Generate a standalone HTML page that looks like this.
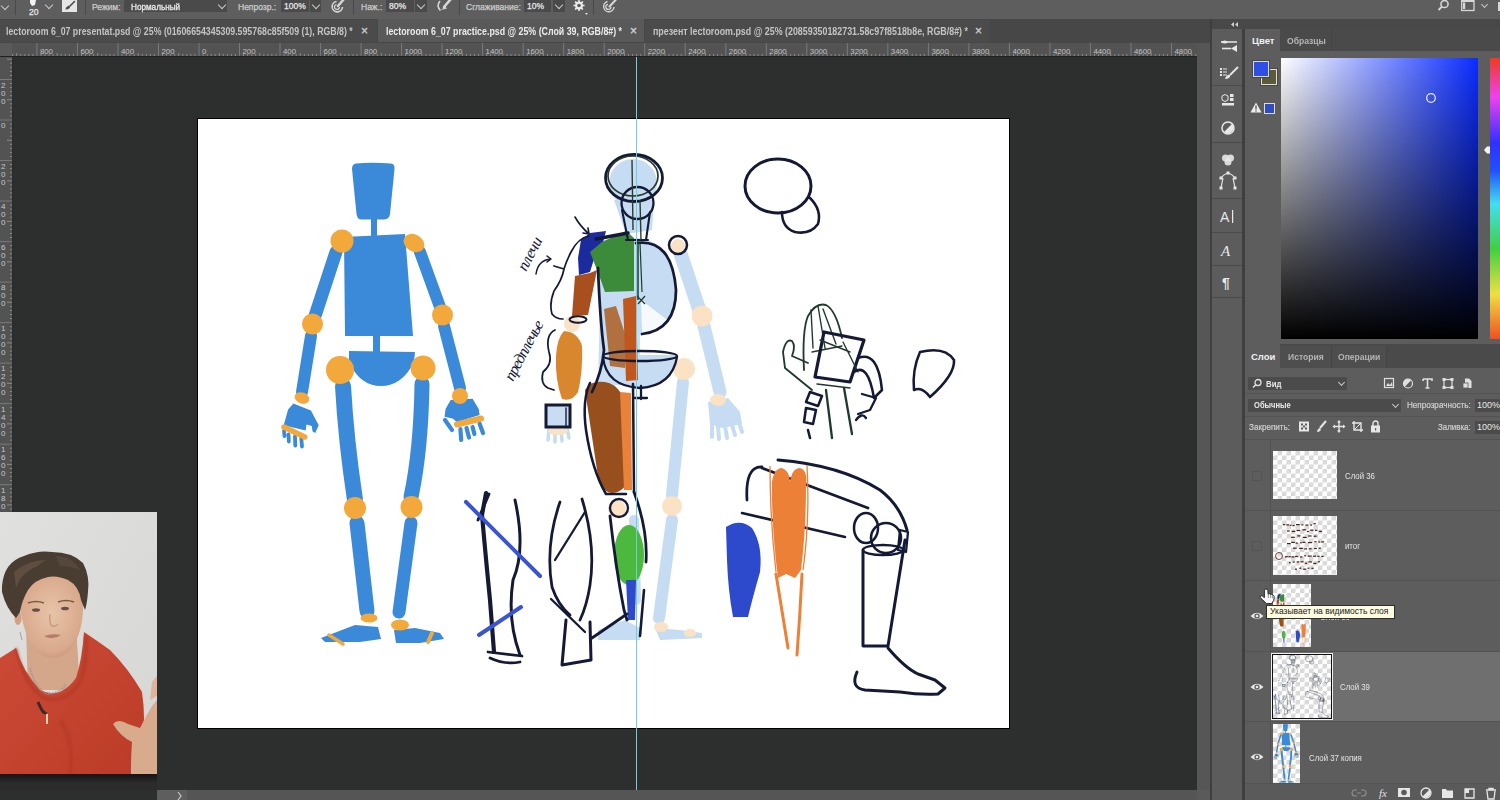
<!DOCTYPE html>
<html><head><meta charset="utf-8">
<style>
*{margin:0;padding:0;box-sizing:border-box}
html,body{width:1500px;height:800px;overflow:hidden;background:#2d2e2e;font-family:"Liberation Sans",sans-serif;position:relative}
.a{position:absolute}
.t{position:absolute;white-space:nowrap;font-family:"Liberation Sans",sans-serif;line-height:1}
svg{position:absolute;overflow:visible}
.chev{position:absolute;width:6px;height:6px;border-right:1.3px solid #c8c8c8;border-bottom:1.3px solid #c8c8c8;transform:rotate(45deg)}
.sep{position:absolute;width:1px;background:#4a4a4a}
.box{position:absolute;background:#4a4a4a}
.ck{background-color:#fff;background-image:linear-gradient(45deg,#d8d8d8 25%,transparent 25%,transparent 75%,#d8d8d8 75%),linear-gradient(45deg,#d8d8d8 25%,transparent 25%,transparent 75%,#d8d8d8 75%);background-size:9px 9px;background-position:0 0,4.5px 4.5px}
</style></head><body>

<!-- ===== options bar ===== -->
<div class="a" id="opt" style="left:0;top:0;width:1500px;height:19px;background:#5e5e5e">
  <div class="chev" style="left:2px;top:3px"></div>
  <div class="sep" style="left:15px;top:0;height:15px"></div>
  <svg style="left:29px;top:0" width="10" height="8"><path d="M1 0 L7 0 L6 5 L3 6 L1 3Z" fill="#f2f2f2"/></svg>
  <div class="t" style="left:29px;top:8px;font-size:8.5px;color:#e8e8e8;-webkit-text-stroke:0.25px currentColor">20</div>
  <div class="chev" style="left:46px;top:2px"></div>
  <div class="a" style="left:62px;top:0;width:15px;height:12px;background:#e6e6e6"></div>
  <svg style="left:62px;top:0" width="15" height="12"><path d="M12.5 1.5 L8 6" stroke="#4a4a4a" stroke-width="1.6" stroke-linecap="round"/><path d="M3.3 9.6 Q4 6.8 6.8 5.6 Q8.6 6.6 7.8 8 Q6 9.6 3.3 9.6Z" fill="#4a4a4a"/></svg>
  <div class="sep" style="left:85px;top:0;height:15px"></div>
  <div class="t" style="left:92px;top:3px;font-size:8.5px;color:#cccccc;-webkit-text-stroke:0.25px currentColor">Режим:</div>
  <div class="box" style="left:124px;top:0;width:103px;height:12px"></div>
  <div class="t" style="left:131px;top:2px;font-size:9.5px;color:#ececec;-webkit-text-stroke:0.3px currentColor;transform:scaleX(0.86);transform-origin:0 0">Нормальный</div>
  <div class="chev" style="left:219px;top:2px"></div>
  <div class="t" style="left:238px;top:3px;font-size:8.5px;color:#cccccc;-webkit-text-stroke:0.25px currentColor">Непрозр.:</div>
  <div class="box" style="left:281px;top:0;width:28px;height:12px"></div>
  <div class="t" style="left:284px;top:2px;font-size:8.5px;color:#e8e8e8;-webkit-text-stroke:0.25px currentColor">100%</div>
  <div class="box" style="left:310px;top:0;width:11px;height:12px"></div>
  <div class="chev" style="left:313px;top:2px"></div>
  <svg style="left:330px;top:0" width="16" height="13"><path d="M6.5 1.5 A5.2 5.2 0 1 0 12.5 7" stroke="#d8d8d8" stroke-width="1.6" fill="none"/><path d="M6.5 4.5 A2.5 2.5 0 1 0 9.5 7" stroke="#d8d8d8" stroke-width="1.2" fill="none"/><path d="M8 6 L14 -1" stroke="#d8d8d8" stroke-width="2.4" stroke-linecap="round"/></svg>
  <div class="sep" style="left:353px;top:0;height:15px"></div>
  <div class="t" style="left:361px;top:3px;font-size:8.5px;color:#cccccc;-webkit-text-stroke:0.25px currentColor">Наж.:</div>
  <div class="box" style="left:386px;top:0;width:28px;height:12px"></div>
  <div class="t" style="left:389px;top:2px;font-size:8.5px;color:#e8e8e8;-webkit-text-stroke:0.25px currentColor">80%</div>
  <div class="box" style="left:415px;top:0;width:12px;height:12px"></div>
  <div class="chev" style="left:418px;top:2px"></div>
  <svg style="left:436px;top:0" width="16" height="12"><path d="M4 1 Q0 6 4.5 10.5" stroke="#d8d8d8" stroke-width="1.6" fill="none"/><path d="M5 10 L9 6.5 L11 8.5 Z" fill="#d8d8d8"/><path d="M8 7 L14.5 -0.5" stroke="#d8d8d8" stroke-width="2.6" stroke-linecap="round"/></svg>
  <div class="sep" style="left:459px;top:0;height:15px"></div>
  <div class="t" style="left:466px;top:3px;font-size:8.5px;color:#cccccc;-webkit-text-stroke:0.25px currentColor">Сглаживание:</div>
  <div class="box" style="left:524px;top:0;width:27px;height:12px"></div>
  <div class="t" style="left:527px;top:2px;font-size:8.5px;color:#e8e8e8;-webkit-text-stroke:0.25px currentColor">10%</div>
  <div class="box" style="left:553px;top:0;width:12px;height:12px"></div>
  <div class="chev" style="left:556px;top:2px"></div>
  <svg style="left:573px;top:0" width="16" height="16"><path d="M9.90,4.63 L11.55,4.77 L11.55,6.23 L9.90,6.37 L9.70,7.02 L9.38,7.64 L10.44,8.91 L9.41,9.94 L8.14,8.88 L7.54,9.19 L6.87,9.40 L6.73,11.05 L5.27,11.05 L5.13,9.40 L4.48,9.20 L3.86,8.88 L2.59,9.94 L1.56,8.91 L2.62,7.64 L2.31,7.04 L2.10,6.37 L0.45,6.23 L0.45,4.77 L2.10,4.63 L2.30,3.98 L2.62,3.36 L1.56,2.09 L2.59,1.06 L3.86,2.12 L4.46,1.81 L5.13,1.60 L5.27,-0.05 L6.73,-0.05 L6.87,1.60 L7.52,1.80 L8.14,2.12 L9.41,1.06 L10.44,2.09 L9.38,3.36 L9.69,3.96Z" fill="#ececec"/><circle cx="6" cy="5.5" r="1.8" fill="#5e5e5e"/><path d="M12 13 L15 13 L13.5 15Z" fill="#e0e0e0"/></svg>
  <div class="sep" style="left:593px;top:0;height:15px"></div>
  <svg style="left:602px;top:0" width="16" height="12"><path d="M5.5 1.5 A5.2 5.2 0 1 0 12 7" stroke="#d8d8d8" stroke-width="1.4" fill="none"/><path d="M6 4.3 A2.6 2.6 0 1 0 9 7" stroke="#d8d8d8" stroke-width="1.2" fill="none"/><path d="M7.5 6.5 L14 -0.5" stroke="#d8d8d8" stroke-width="2" stroke-linecap="round"/></svg>
  <svg style="left:1437px;top:0" width="14" height="12"><circle cx="7.5" cy="4" r="3.6" stroke="#d8d8d8" stroke-width="1.5" fill="none"/><path d="M5 6.5 L1.5 10" stroke="#d8d8d8" stroke-width="1.8"/></svg>
  <svg style="left:1461px;top:0" width="14" height="12"><rect x="0.7" y="0.7" width="12.3" height="9.8" fill="none" stroke="#d8d8d8" stroke-width="1.3"/><rect x="0.7" y="0" width="12.3" height="2" fill="#d8d8d8"/><rect x="2" y="2.5" width="2.2" height="6.5" fill="#d8d8d8"/></svg>
  <div class="chev" style="left:1482px;top:2px;width:5px;height:5px"></div>
  <div class="a" style="left:1498px;top:2px;width:2px;height:9px;background:#d8d8d8"></div>
</div>

<!-- ===== document tab bar ===== -->
<div class="a" id="tabs" style="left:0;top:19px;width:1211px;height:24px;background:#474747"></div>
<div class="a" style="left:0;top:20px;width:377px;height:22px;background:#4b4b4b"></div>
<div class="a" style="left:645px;top:20px;width:345px;height:22px;background:#4b4b4b"></div>
<div class="a" style="left:378px;top:19px;width:266px;height:23px;background:#595959"></div>
<div class="t" id="tab1" style="left:6px;top:27px;font-size:10px;font-weight:bold;color:#c4c4c4;transform:scaleX(0.878);transform-origin:0 0">lectoroom 6_07 presentat.psd @ 25% (01606654345309.595768c85f509 (1), RGB/8) *</div>
<div class="t" style="left:361px;top:25px;font-size:12px;-webkit-text-stroke:0.4px currentColor;color:#c8c8c8">×</div>
<div class="t" id="tab2" style="left:386px;top:27px;font-size:10px;font-weight:bold;color:#ececec;transform:scaleX(0.8815);transform-origin:0 0">lectoroom 6_07 practice.psd @ 25% (Слой 39, RGB/8#) *</div>
<div class="t" style="left:630px;top:25px;font-size:12px;-webkit-text-stroke:0.4px currentColor;color:#d0d0d0">×</div>
<div class="t" id="tab3" style="left:653px;top:27px;font-size:10px;font-weight:bold;color:#c4c4c4;transform:scaleX(0.887);transform-origin:0 0">презент lectoroom.psd @ 25% (20859350182731.58c97f8518b8e, RGB/8#) *</div>
<div class="t" style="left:975px;top:25px;font-size:12px;-webkit-text-stroke:0.4px currentColor;color:#c8c8c8">×</div>

<!-- ===== rulers ===== -->
<div class="a" id="hr" style="left:0;top:43px;width:1197px;height:13px;background:#535353">
 <svg style="left:0;top:0" width="1197" height="13"><rect x="12.1" y="11" width="1" height="2" fill="#8a8a8a"/>
<rect x="16.2" y="10" width="1" height="3" fill="#8a8a8a"/>
<rect x="20.2" y="11" width="1" height="2" fill="#8a8a8a"/>
<rect x="24.3" y="11" width="1" height="2" fill="#8a8a8a"/>
<rect x="28.3" y="11" width="1" height="2" fill="#8a8a8a"/>
<rect x="32.4" y="11" width="1" height="2" fill="#8a8a8a"/>
<rect x="36.4" y="0" width="1" height="13" fill="#7a7a7a"/>
<rect x="40.5" y="11" width="1" height="2" fill="#8a8a8a"/>
<rect x="44.5" y="11" width="1" height="2" fill="#8a8a8a"/>
<rect x="48.6" y="11" width="1" height="2" fill="#8a8a8a"/>
<rect x="52.6" y="11" width="1" height="2" fill="#8a8a8a"/>
<rect x="56.7" y="10" width="1" height="3" fill="#8a8a8a"/>
<rect x="60.7" y="11" width="1" height="2" fill="#8a8a8a"/>
<rect x="64.8" y="11" width="1" height="2" fill="#8a8a8a"/>
<rect x="68.8" y="11" width="1" height="2" fill="#8a8a8a"/>
<rect x="72.9" y="11" width="1" height="2" fill="#8a8a8a"/>
<text x="39.9" y="11" font-size="7.8" fill="#c4c4c4" font-family="Liberation Sans">800</text>
<rect x="76.9" y="0" width="1" height="13" fill="#7a7a7a"/>
<rect x="81.0" y="11" width="1" height="2" fill="#8a8a8a"/>
<rect x="85.0" y="11" width="1" height="2" fill="#8a8a8a"/>
<rect x="89.1" y="11" width="1" height="2" fill="#8a8a8a"/>
<rect x="93.1" y="11" width="1" height="2" fill="#8a8a8a"/>
<rect x="97.2" y="10" width="1" height="3" fill="#8a8a8a"/>
<rect x="101.3" y="11" width="1" height="2" fill="#8a8a8a"/>
<rect x="105.3" y="11" width="1" height="2" fill="#8a8a8a"/>
<rect x="109.4" y="11" width="1" height="2" fill="#8a8a8a"/>
<rect x="113.4" y="11" width="1" height="2" fill="#8a8a8a"/>
<text x="80.4" y="11" font-size="7.8" fill="#c4c4c4" font-family="Liberation Sans">600</text>
<rect x="117.5" y="0" width="1" height="13" fill="#7a7a7a"/>
<rect x="121.5" y="11" width="1" height="2" fill="#8a8a8a"/>
<rect x="125.6" y="11" width="1" height="2" fill="#8a8a8a"/>
<rect x="129.6" y="11" width="1" height="2" fill="#8a8a8a"/>
<rect x="133.7" y="11" width="1" height="2" fill="#8a8a8a"/>
<rect x="137.7" y="10" width="1" height="3" fill="#8a8a8a"/>
<rect x="141.8" y="11" width="1" height="2" fill="#8a8a8a"/>
<rect x="145.8" y="11" width="1" height="2" fill="#8a8a8a"/>
<rect x="149.9" y="11" width="1" height="2" fill="#8a8a8a"/>
<rect x="153.9" y="11" width="1" height="2" fill="#8a8a8a"/>
<text x="121.0" y="11" font-size="7.8" fill="#c4c4c4" font-family="Liberation Sans">400</text>
<rect x="158.0" y="0" width="1" height="13" fill="#7a7a7a"/>
<rect x="162.0" y="11" width="1" height="2" fill="#8a8a8a"/>
<rect x="166.1" y="11" width="1" height="2" fill="#8a8a8a"/>
<rect x="170.1" y="11" width="1" height="2" fill="#8a8a8a"/>
<rect x="174.2" y="11" width="1" height="2" fill="#8a8a8a"/>
<rect x="178.2" y="10" width="1" height="3" fill="#8a8a8a"/>
<rect x="182.3" y="11" width="1" height="2" fill="#8a8a8a"/>
<rect x="186.3" y="11" width="1" height="2" fill="#8a8a8a"/>
<rect x="190.4" y="11" width="1" height="2" fill="#8a8a8a"/>
<rect x="194.4" y="11" width="1" height="2" fill="#8a8a8a"/>
<text x="161.5" y="11" font-size="7.8" fill="#c4c4c4" font-family="Liberation Sans">200</text>
<rect x="198.5" y="0" width="1" height="13" fill="#7a7a7a"/>
<rect x="202.6" y="11" width="1" height="2" fill="#8a8a8a"/>
<rect x="206.6" y="11" width="1" height="2" fill="#8a8a8a"/>
<rect x="210.7" y="11" width="1" height="2" fill="#8a8a8a"/>
<rect x="214.7" y="11" width="1" height="2" fill="#8a8a8a"/>
<rect x="218.8" y="10" width="1" height="3" fill="#8a8a8a"/>
<rect x="222.8" y="11" width="1" height="2" fill="#8a8a8a"/>
<rect x="226.9" y="11" width="1" height="2" fill="#8a8a8a"/>
<rect x="230.9" y="11" width="1" height="2" fill="#8a8a8a"/>
<rect x="235.0" y="11" width="1" height="2" fill="#8a8a8a"/>
<text x="202.0" y="11" font-size="7.8" fill="#c4c4c4" font-family="Liberation Sans">0</text>
<rect x="239.0" y="0" width="1" height="13" fill="#7a7a7a"/>
<rect x="243.1" y="11" width="1" height="2" fill="#8a8a8a"/>
<rect x="247.1" y="11" width="1" height="2" fill="#8a8a8a"/>
<rect x="251.2" y="11" width="1" height="2" fill="#8a8a8a"/>
<rect x="255.2" y="11" width="1" height="2" fill="#8a8a8a"/>
<rect x="259.3" y="10" width="1" height="3" fill="#8a8a8a"/>
<rect x="263.3" y="11" width="1" height="2" fill="#8a8a8a"/>
<rect x="267.4" y="11" width="1" height="2" fill="#8a8a8a"/>
<rect x="271.4" y="11" width="1" height="2" fill="#8a8a8a"/>
<rect x="275.5" y="11" width="1" height="2" fill="#8a8a8a"/>
<text x="242.5" y="11" font-size="7.8" fill="#c4c4c4" font-family="Liberation Sans">200</text>
<rect x="279.5" y="0" width="1" height="13" fill="#7a7a7a"/>
<rect x="283.6" y="11" width="1" height="2" fill="#8a8a8a"/>
<rect x="287.6" y="11" width="1" height="2" fill="#8a8a8a"/>
<rect x="291.7" y="11" width="1" height="2" fill="#8a8a8a"/>
<rect x="295.7" y="11" width="1" height="2" fill="#8a8a8a"/>
<rect x="299.8" y="10" width="1" height="3" fill="#8a8a8a"/>
<rect x="303.9" y="11" width="1" height="2" fill="#8a8a8a"/>
<rect x="307.9" y="11" width="1" height="2" fill="#8a8a8a"/>
<rect x="312.0" y="11" width="1" height="2" fill="#8a8a8a"/>
<rect x="316.0" y="11" width="1" height="2" fill="#8a8a8a"/>
<text x="283.0" y="11" font-size="7.8" fill="#c4c4c4" font-family="Liberation Sans">400</text>
<rect x="320.1" y="0" width="1" height="13" fill="#7a7a7a"/>
<rect x="324.1" y="11" width="1" height="2" fill="#8a8a8a"/>
<rect x="328.2" y="11" width="1" height="2" fill="#8a8a8a"/>
<rect x="332.2" y="11" width="1" height="2" fill="#8a8a8a"/>
<rect x="336.3" y="11" width="1" height="2" fill="#8a8a8a"/>
<rect x="340.3" y="10" width="1" height="3" fill="#8a8a8a"/>
<rect x="344.4" y="11" width="1" height="2" fill="#8a8a8a"/>
<rect x="348.4" y="11" width="1" height="2" fill="#8a8a8a"/>
<rect x="352.5" y="11" width="1" height="2" fill="#8a8a8a"/>
<rect x="356.5" y="11" width="1" height="2" fill="#8a8a8a"/>
<text x="323.6" y="11" font-size="7.8" fill="#c4c4c4" font-family="Liberation Sans">600</text>
<rect x="360.6" y="0" width="1" height="13" fill="#7a7a7a"/>
<rect x="364.6" y="11" width="1" height="2" fill="#8a8a8a"/>
<rect x="368.7" y="11" width="1" height="2" fill="#8a8a8a"/>
<rect x="372.7" y="11" width="1" height="2" fill="#8a8a8a"/>
<rect x="376.8" y="11" width="1" height="2" fill="#8a8a8a"/>
<rect x="380.8" y="10" width="1" height="3" fill="#8a8a8a"/>
<rect x="384.9" y="11" width="1" height="2" fill="#8a8a8a"/>
<rect x="388.9" y="11" width="1" height="2" fill="#8a8a8a"/>
<rect x="393.0" y="11" width="1" height="2" fill="#8a8a8a"/>
<rect x="397.0" y="11" width="1" height="2" fill="#8a8a8a"/>
<text x="364.1" y="11" font-size="7.8" fill="#c4c4c4" font-family="Liberation Sans">800</text>
<rect x="401.1" y="0" width="1" height="13" fill="#7a7a7a"/>
<rect x="405.2" y="11" width="1" height="2" fill="#8a8a8a"/>
<rect x="409.2" y="11" width="1" height="2" fill="#8a8a8a"/>
<rect x="413.3" y="11" width="1" height="2" fill="#8a8a8a"/>
<rect x="417.3" y="11" width="1" height="2" fill="#8a8a8a"/>
<rect x="421.4" y="10" width="1" height="3" fill="#8a8a8a"/>
<rect x="425.4" y="11" width="1" height="2" fill="#8a8a8a"/>
<rect x="429.5" y="11" width="1" height="2" fill="#8a8a8a"/>
<rect x="433.5" y="11" width="1" height="2" fill="#8a8a8a"/>
<rect x="437.6" y="11" width="1" height="2" fill="#8a8a8a"/>
<text x="404.6" y="11" font-size="7.8" fill="#c4c4c4" font-family="Liberation Sans">1000</text>
<rect x="441.6" y="0" width="1" height="13" fill="#7a7a7a"/>
<rect x="445.7" y="11" width="1" height="2" fill="#8a8a8a"/>
<rect x="449.7" y="11" width="1" height="2" fill="#8a8a8a"/>
<rect x="453.8" y="11" width="1" height="2" fill="#8a8a8a"/>
<rect x="457.8" y="11" width="1" height="2" fill="#8a8a8a"/>
<rect x="461.9" y="10" width="1" height="3" fill="#8a8a8a"/>
<rect x="465.9" y="11" width="1" height="2" fill="#8a8a8a"/>
<rect x="470.0" y="11" width="1" height="2" fill="#8a8a8a"/>
<rect x="474.0" y="11" width="1" height="2" fill="#8a8a8a"/>
<rect x="478.1" y="11" width="1" height="2" fill="#8a8a8a"/>
<text x="445.1" y="11" font-size="7.8" fill="#c4c4c4" font-family="Liberation Sans">1200</text>
<rect x="482.1" y="0" width="1" height="13" fill="#7a7a7a"/>
<rect x="486.2" y="11" width="1" height="2" fill="#8a8a8a"/>
<rect x="490.2" y="11" width="1" height="2" fill="#8a8a8a"/>
<rect x="494.3" y="11" width="1" height="2" fill="#8a8a8a"/>
<rect x="498.3" y="11" width="1" height="2" fill="#8a8a8a"/>
<rect x="502.4" y="10" width="1" height="3" fill="#8a8a8a"/>
<rect x="506.5" y="11" width="1" height="2" fill="#8a8a8a"/>
<rect x="510.5" y="11" width="1" height="2" fill="#8a8a8a"/>
<rect x="514.6" y="11" width="1" height="2" fill="#8a8a8a"/>
<rect x="518.6" y="11" width="1" height="2" fill="#8a8a8a"/>
<text x="485.6" y="11" font-size="7.8" fill="#c4c4c4" font-family="Liberation Sans">1400</text>
<rect x="522.7" y="0" width="1" height="13" fill="#7a7a7a"/>
<rect x="526.7" y="11" width="1" height="2" fill="#8a8a8a"/>
<rect x="530.8" y="11" width="1" height="2" fill="#8a8a8a"/>
<rect x="534.8" y="11" width="1" height="2" fill="#8a8a8a"/>
<rect x="538.9" y="11" width="1" height="2" fill="#8a8a8a"/>
<rect x="542.9" y="10" width="1" height="3" fill="#8a8a8a"/>
<rect x="547.0" y="11" width="1" height="2" fill="#8a8a8a"/>
<rect x="551.0" y="11" width="1" height="2" fill="#8a8a8a"/>
<rect x="555.1" y="11" width="1" height="2" fill="#8a8a8a"/>
<rect x="559.1" y="11" width="1" height="2" fill="#8a8a8a"/>
<text x="526.2" y="11" font-size="7.8" fill="#c4c4c4" font-family="Liberation Sans">1600</text>
<rect x="563.2" y="0" width="1" height="13" fill="#7a7a7a"/>
<rect x="567.2" y="11" width="1" height="2" fill="#8a8a8a"/>
<rect x="571.3" y="11" width="1" height="2" fill="#8a8a8a"/>
<rect x="575.3" y="11" width="1" height="2" fill="#8a8a8a"/>
<rect x="579.4" y="11" width="1" height="2" fill="#8a8a8a"/>
<rect x="583.4" y="10" width="1" height="3" fill="#8a8a8a"/>
<rect x="587.5" y="11" width="1" height="2" fill="#8a8a8a"/>
<rect x="591.5" y="11" width="1" height="2" fill="#8a8a8a"/>
<rect x="595.6" y="11" width="1" height="2" fill="#8a8a8a"/>
<rect x="599.6" y="11" width="1" height="2" fill="#8a8a8a"/>
<text x="566.7" y="11" font-size="7.8" fill="#c4c4c4" font-family="Liberation Sans">1800</text>
<rect x="603.7" y="0" width="1" height="13" fill="#7a7a7a"/>
<rect x="607.8" y="11" width="1" height="2" fill="#8a8a8a"/>
<rect x="611.8" y="11" width="1" height="2" fill="#8a8a8a"/>
<rect x="615.9" y="11" width="1" height="2" fill="#8a8a8a"/>
<rect x="619.9" y="11" width="1" height="2" fill="#8a8a8a"/>
<rect x="624.0" y="10" width="1" height="3" fill="#8a8a8a"/>
<rect x="628.0" y="11" width="1" height="2" fill="#8a8a8a"/>
<rect x="632.1" y="11" width="1" height="2" fill="#8a8a8a"/>
<rect x="636.1" y="11" width="1" height="2" fill="#8a8a8a"/>
<rect x="640.2" y="11" width="1" height="2" fill="#8a8a8a"/>
<text x="607.2" y="11" font-size="7.8" fill="#c4c4c4" font-family="Liberation Sans">2000</text>
<rect x="644.2" y="0" width="1" height="13" fill="#7a7a7a"/>
<rect x="648.3" y="11" width="1" height="2" fill="#8a8a8a"/>
<rect x="652.3" y="11" width="1" height="2" fill="#8a8a8a"/>
<rect x="656.4" y="11" width="1" height="2" fill="#8a8a8a"/>
<rect x="660.4" y="11" width="1" height="2" fill="#8a8a8a"/>
<rect x="664.5" y="10" width="1" height="3" fill="#8a8a8a"/>
<rect x="668.5" y="11" width="1" height="2" fill="#8a8a8a"/>
<rect x="672.6" y="11" width="1" height="2" fill="#8a8a8a"/>
<rect x="676.6" y="11" width="1" height="2" fill="#8a8a8a"/>
<rect x="680.7" y="11" width="1" height="2" fill="#8a8a8a"/>
<text x="647.7" y="11" font-size="7.8" fill="#c4c4c4" font-family="Liberation Sans">2200</text>
<rect x="684.7" y="0" width="1" height="13" fill="#7a7a7a"/>
<rect x="688.8" y="11" width="1" height="2" fill="#8a8a8a"/>
<rect x="692.8" y="11" width="1" height="2" fill="#8a8a8a"/>
<rect x="696.9" y="11" width="1" height="2" fill="#8a8a8a"/>
<rect x="700.9" y="11" width="1" height="2" fill="#8a8a8a"/>
<rect x="705.0" y="10" width="1" height="3" fill="#8a8a8a"/>
<rect x="709.1" y="11" width="1" height="2" fill="#8a8a8a"/>
<rect x="713.1" y="11" width="1" height="2" fill="#8a8a8a"/>
<rect x="717.2" y="11" width="1" height="2" fill="#8a8a8a"/>
<rect x="721.2" y="11" width="1" height="2" fill="#8a8a8a"/>
<text x="688.2" y="11" font-size="7.8" fill="#c4c4c4" font-family="Liberation Sans">2400</text>
<rect x="725.3" y="0" width="1" height="13" fill="#7a7a7a"/>
<rect x="729.3" y="11" width="1" height="2" fill="#8a8a8a"/>
<rect x="733.4" y="11" width="1" height="2" fill="#8a8a8a"/>
<rect x="737.4" y="11" width="1" height="2" fill="#8a8a8a"/>
<rect x="741.5" y="11" width="1" height="2" fill="#8a8a8a"/>
<rect x="745.5" y="10" width="1" height="3" fill="#8a8a8a"/>
<rect x="749.6" y="11" width="1" height="2" fill="#8a8a8a"/>
<rect x="753.6" y="11" width="1" height="2" fill="#8a8a8a"/>
<rect x="757.7" y="11" width="1" height="2" fill="#8a8a8a"/>
<rect x="761.7" y="11" width="1" height="2" fill="#8a8a8a"/>
<text x="728.8" y="11" font-size="7.8" fill="#c4c4c4" font-family="Liberation Sans">2600</text>
<rect x="765.8" y="0" width="1" height="13" fill="#7a7a7a"/>
<rect x="769.8" y="11" width="1" height="2" fill="#8a8a8a"/>
<rect x="773.9" y="11" width="1" height="2" fill="#8a8a8a"/>
<rect x="777.9" y="11" width="1" height="2" fill="#8a8a8a"/>
<rect x="782.0" y="11" width="1" height="2" fill="#8a8a8a"/>
<rect x="786.0" y="10" width="1" height="3" fill="#8a8a8a"/>
<rect x="790.1" y="11" width="1" height="2" fill="#8a8a8a"/>
<rect x="794.1" y="11" width="1" height="2" fill="#8a8a8a"/>
<rect x="798.2" y="11" width="1" height="2" fill="#8a8a8a"/>
<rect x="802.2" y="11" width="1" height="2" fill="#8a8a8a"/>
<text x="769.3" y="11" font-size="7.8" fill="#c4c4c4" font-family="Liberation Sans">2800</text>
<rect x="806.3" y="0" width="1" height="13" fill="#7a7a7a"/>
<rect x="810.4" y="11" width="1" height="2" fill="#8a8a8a"/>
<rect x="814.4" y="11" width="1" height="2" fill="#8a8a8a"/>
<rect x="818.5" y="11" width="1" height="2" fill="#8a8a8a"/>
<rect x="822.5" y="11" width="1" height="2" fill="#8a8a8a"/>
<rect x="826.6" y="10" width="1" height="3" fill="#8a8a8a"/>
<rect x="830.6" y="11" width="1" height="2" fill="#8a8a8a"/>
<rect x="834.7" y="11" width="1" height="2" fill="#8a8a8a"/>
<rect x="838.7" y="11" width="1" height="2" fill="#8a8a8a"/>
<rect x="842.8" y="11" width="1" height="2" fill="#8a8a8a"/>
<text x="809.8" y="11" font-size="7.8" fill="#c4c4c4" font-family="Liberation Sans">3000</text>
<rect x="846.8" y="0" width="1" height="13" fill="#7a7a7a"/>
<rect x="850.9" y="11" width="1" height="2" fill="#8a8a8a"/>
<rect x="854.9" y="11" width="1" height="2" fill="#8a8a8a"/>
<rect x="859.0" y="11" width="1" height="2" fill="#8a8a8a"/>
<rect x="863.0" y="11" width="1" height="2" fill="#8a8a8a"/>
<rect x="867.1" y="10" width="1" height="3" fill="#8a8a8a"/>
<rect x="871.1" y="11" width="1" height="2" fill="#8a8a8a"/>
<rect x="875.2" y="11" width="1" height="2" fill="#8a8a8a"/>
<rect x="879.2" y="11" width="1" height="2" fill="#8a8a8a"/>
<rect x="883.3" y="11" width="1" height="2" fill="#8a8a8a"/>
<text x="850.3" y="11" font-size="7.8" fill="#c4c4c4" font-family="Liberation Sans">3200</text>
<rect x="887.3" y="0" width="1" height="13" fill="#7a7a7a"/>
<rect x="891.4" y="11" width="1" height="2" fill="#8a8a8a"/>
<rect x="895.4" y="11" width="1" height="2" fill="#8a8a8a"/>
<rect x="899.5" y="11" width="1" height="2" fill="#8a8a8a"/>
<rect x="903.5" y="11" width="1" height="2" fill="#8a8a8a"/>
<rect x="907.6" y="10" width="1" height="3" fill="#8a8a8a"/>
<rect x="911.7" y="11" width="1" height="2" fill="#8a8a8a"/>
<rect x="915.7" y="11" width="1" height="2" fill="#8a8a8a"/>
<rect x="919.8" y="11" width="1" height="2" fill="#8a8a8a"/>
<rect x="923.8" y="11" width="1" height="2" fill="#8a8a8a"/>
<text x="890.8" y="11" font-size="7.8" fill="#c4c4c4" font-family="Liberation Sans">3400</text>
<rect x="927.9" y="0" width="1" height="13" fill="#7a7a7a"/>
<rect x="931.9" y="11" width="1" height="2" fill="#8a8a8a"/>
<rect x="936.0" y="11" width="1" height="2" fill="#8a8a8a"/>
<rect x="940.0" y="11" width="1" height="2" fill="#8a8a8a"/>
<rect x="944.1" y="11" width="1" height="2" fill="#8a8a8a"/>
<rect x="948.1" y="10" width="1" height="3" fill="#8a8a8a"/>
<rect x="952.2" y="11" width="1" height="2" fill="#8a8a8a"/>
<rect x="956.2" y="11" width="1" height="2" fill="#8a8a8a"/>
<rect x="960.3" y="11" width="1" height="2" fill="#8a8a8a"/>
<rect x="964.3" y="11" width="1" height="2" fill="#8a8a8a"/>
<text x="931.4" y="11" font-size="7.8" fill="#c4c4c4" font-family="Liberation Sans">3600</text>
<rect x="968.4" y="0" width="1" height="13" fill="#7a7a7a"/>
<rect x="972.4" y="11" width="1" height="2" fill="#8a8a8a"/>
<rect x="976.5" y="11" width="1" height="2" fill="#8a8a8a"/>
<rect x="980.5" y="11" width="1" height="2" fill="#8a8a8a"/>
<rect x="984.6" y="11" width="1" height="2" fill="#8a8a8a"/>
<rect x="988.6" y="10" width="1" height="3" fill="#8a8a8a"/>
<rect x="992.7" y="11" width="1" height="2" fill="#8a8a8a"/>
<rect x="996.7" y="11" width="1" height="2" fill="#8a8a8a"/>
<rect x="1000.8" y="11" width="1" height="2" fill="#8a8a8a"/>
<rect x="1004.8" y="11" width="1" height="2" fill="#8a8a8a"/>
<text x="971.9" y="11" font-size="7.8" fill="#c4c4c4" font-family="Liberation Sans">3800</text>
<rect x="1008.9" y="0" width="1" height="13" fill="#7a7a7a"/>
<rect x="1013.0" y="11" width="1" height="2" fill="#8a8a8a"/>
<rect x="1017.0" y="11" width="1" height="2" fill="#8a8a8a"/>
<rect x="1021.1" y="11" width="1" height="2" fill="#8a8a8a"/>
<rect x="1025.1" y="11" width="1" height="2" fill="#8a8a8a"/>
<rect x="1029.2" y="10" width="1" height="3" fill="#8a8a8a"/>
<rect x="1033.2" y="11" width="1" height="2" fill="#8a8a8a"/>
<rect x="1037.3" y="11" width="1" height="2" fill="#8a8a8a"/>
<rect x="1041.3" y="11" width="1" height="2" fill="#8a8a8a"/>
<rect x="1045.4" y="11" width="1" height="2" fill="#8a8a8a"/>
<text x="1012.4" y="11" font-size="7.8" fill="#c4c4c4" font-family="Liberation Sans">4000</text>
<rect x="1049.4" y="0" width="1" height="13" fill="#7a7a7a"/>
<rect x="1053.5" y="11" width="1" height="2" fill="#8a8a8a"/>
<rect x="1057.5" y="11" width="1" height="2" fill="#8a8a8a"/>
<rect x="1061.6" y="11" width="1" height="2" fill="#8a8a8a"/>
<rect x="1065.6" y="11" width="1" height="2" fill="#8a8a8a"/>
<rect x="1069.7" y="10" width="1" height="3" fill="#8a8a8a"/>
<rect x="1073.7" y="11" width="1" height="2" fill="#8a8a8a"/>
<rect x="1077.8" y="11" width="1" height="2" fill="#8a8a8a"/>
<rect x="1081.8" y="11" width="1" height="2" fill="#8a8a8a"/>
<rect x="1085.9" y="11" width="1" height="2" fill="#8a8a8a"/>
<text x="1052.9" y="11" font-size="7.8" fill="#c4c4c4" font-family="Liberation Sans">4200</text>
<rect x="1089.9" y="0" width="1" height="13" fill="#7a7a7a"/>
<rect x="1094.0" y="11" width="1" height="2" fill="#8a8a8a"/>
<rect x="1098.0" y="11" width="1" height="2" fill="#8a8a8a"/>
<rect x="1102.1" y="11" width="1" height="2" fill="#8a8a8a"/>
<rect x="1106.1" y="11" width="1" height="2" fill="#8a8a8a"/>
<rect x="1110.2" y="10" width="1" height="3" fill="#8a8a8a"/>
<rect x="1114.3" y="11" width="1" height="2" fill="#8a8a8a"/>
<rect x="1118.3" y="11" width="1" height="2" fill="#8a8a8a"/>
<rect x="1122.4" y="11" width="1" height="2" fill="#8a8a8a"/>
<rect x="1126.4" y="11" width="1" height="2" fill="#8a8a8a"/>
<text x="1093.4" y="11" font-size="7.8" fill="#c4c4c4" font-family="Liberation Sans">4400</text>
<rect x="1130.5" y="0" width="1" height="13" fill="#7a7a7a"/>
<rect x="1134.5" y="11" width="1" height="2" fill="#8a8a8a"/>
<rect x="1138.6" y="11" width="1" height="2" fill="#8a8a8a"/>
<rect x="1142.6" y="11" width="1" height="2" fill="#8a8a8a"/>
<rect x="1146.7" y="11" width="1" height="2" fill="#8a8a8a"/>
<rect x="1150.7" y="10" width="1" height="3" fill="#8a8a8a"/>
<rect x="1154.8" y="11" width="1" height="2" fill="#8a8a8a"/>
<rect x="1158.8" y="11" width="1" height="2" fill="#8a8a8a"/>
<rect x="1162.9" y="11" width="1" height="2" fill="#8a8a8a"/>
<rect x="1166.9" y="11" width="1" height="2" fill="#8a8a8a"/>
<text x="1134.0" y="11" font-size="7.8" fill="#c4c4c4" font-family="Liberation Sans">4600</text>
<rect x="1171.0" y="0" width="1" height="13" fill="#7a7a7a"/>
<rect x="1175.0" y="11" width="1" height="2" fill="#8a8a8a"/>
<rect x="1179.1" y="11" width="1" height="2" fill="#8a8a8a"/>
<rect x="1183.1" y="11" width="1" height="2" fill="#8a8a8a"/>
<rect x="1187.2" y="11" width="1" height="2" fill="#8a8a8a"/>
<rect x="1191.2" y="10" width="1" height="3" fill="#8a8a8a"/>
<rect x="1195.3" y="11" width="1" height="2" fill="#8a8a8a"/>
<text x="1174.5" y="11" font-size="7.8" fill="#c4c4c4" font-family="Liberation Sans">4800</text></svg>
</div>
<div class="a" style="left:0;top:56px;width:1197px;height:1px;background:#222"></div>
<div class="a" style="left:0;top:43px;width:12px;height:13px;background:#5a5a5a"></div>
<div class="a" id="vr" style="left:0;top:57px;width:12px;height:733px;background:#535353">
 <svg style="left:0;top:0" width="12" height="733"><rect x="7" y="1.7" width="5" height="1" fill="#8a8a8a"/>
<rect x="10" y="5.8" width="2" height="1" fill="#8a8a8a"/>
<rect x="10" y="9.8" width="2" height="1" fill="#8a8a8a"/>
<rect x="10" y="13.9" width="2" height="1" fill="#8a8a8a"/>
<rect x="10" y="17.9" width="2" height="1" fill="#8a8a8a"/>
<rect x="0" y="22.0" width="12" height="1" fill="#7a7a7a"/>
<rect x="10" y="26.0" width="2" height="1" fill="#8a8a8a"/>
<rect x="10" y="30.1" width="2" height="1" fill="#8a8a8a"/>
<rect x="10" y="34.1" width="2" height="1" fill="#8a8a8a"/>
<rect x="10" y="38.2" width="2" height="1" fill="#8a8a8a"/>
<rect x="7" y="42.2" width="5" height="1" fill="#8a8a8a"/>
<rect x="10" y="46.3" width="2" height="1" fill="#8a8a8a"/>
<rect x="10" y="50.3" width="2" height="1" fill="#8a8a8a"/>
<rect x="10" y="54.4" width="2" height="1" fill="#8a8a8a"/>
<rect x="10" y="58.4" width="2" height="1" fill="#8a8a8a"/>
<text x="1" y="30.5" font-size="8" fill="#c9c9c9" font-family="Liberation Sans">2</text>
<text x="1" y="38.5" font-size="8" fill="#c9c9c9" font-family="Liberation Sans">0</text>
<text x="1" y="46.5" font-size="8" fill="#c9c9c9" font-family="Liberation Sans">0</text>
<rect x="0" y="62.5" width="12" height="1" fill="#7a7a7a"/>
<rect x="10" y="66.6" width="2" height="1" fill="#8a8a8a"/>
<rect x="10" y="70.6" width="2" height="1" fill="#8a8a8a"/>
<rect x="10" y="74.7" width="2" height="1" fill="#8a8a8a"/>
<rect x="10" y="78.7" width="2" height="1" fill="#8a8a8a"/>
<rect x="7" y="82.8" width="5" height="1" fill="#8a8a8a"/>
<rect x="10" y="86.8" width="2" height="1" fill="#8a8a8a"/>
<rect x="10" y="90.9" width="2" height="1" fill="#8a8a8a"/>
<rect x="10" y="94.9" width="2" height="1" fill="#8a8a8a"/>
<rect x="10" y="99.0" width="2" height="1" fill="#8a8a8a"/>
<text x="1" y="71.0" font-size="8" fill="#c9c9c9" font-family="Liberation Sans">0</text>
<rect x="0" y="103.0" width="12" height="1" fill="#7a7a7a"/>
<rect x="10" y="107.1" width="2" height="1" fill="#8a8a8a"/>
<rect x="10" y="111.1" width="2" height="1" fill="#8a8a8a"/>
<rect x="10" y="115.2" width="2" height="1" fill="#8a8a8a"/>
<rect x="10" y="119.2" width="2" height="1" fill="#8a8a8a"/>
<rect x="7" y="123.3" width="5" height="1" fill="#8a8a8a"/>
<rect x="10" y="127.3" width="2" height="1" fill="#8a8a8a"/>
<rect x="10" y="131.4" width="2" height="1" fill="#8a8a8a"/>
<rect x="10" y="135.4" width="2" height="1" fill="#8a8a8a"/>
<rect x="10" y="139.5" width="2" height="1" fill="#8a8a8a"/>
<text x="1" y="111.5" font-size="8" fill="#c9c9c9" font-family="Liberation Sans">2</text>
<text x="1" y="119.5" font-size="8" fill="#c9c9c9" font-family="Liberation Sans">0</text>
<text x="1" y="127.5" font-size="8" fill="#c9c9c9" font-family="Liberation Sans">0</text>
<rect x="0" y="143.5" width="12" height="1" fill="#7a7a7a"/>
<rect x="10" y="147.6" width="2" height="1" fill="#8a8a8a"/>
<rect x="10" y="151.6" width="2" height="1" fill="#8a8a8a"/>
<rect x="10" y="155.7" width="2" height="1" fill="#8a8a8a"/>
<rect x="10" y="159.7" width="2" height="1" fill="#8a8a8a"/>
<rect x="7" y="163.8" width="5" height="1" fill="#8a8a8a"/>
<rect x="10" y="167.9" width="2" height="1" fill="#8a8a8a"/>
<rect x="10" y="171.9" width="2" height="1" fill="#8a8a8a"/>
<rect x="10" y="176.0" width="2" height="1" fill="#8a8a8a"/>
<rect x="10" y="180.0" width="2" height="1" fill="#8a8a8a"/>
<text x="1" y="152.0" font-size="8" fill="#c9c9c9" font-family="Liberation Sans">4</text>
<text x="1" y="160.0" font-size="8" fill="#c9c9c9" font-family="Liberation Sans">0</text>
<text x="1" y="168.0" font-size="8" fill="#c9c9c9" font-family="Liberation Sans">0</text>
<rect x="0" y="184.1" width="12" height="1" fill="#7a7a7a"/>
<rect x="10" y="188.1" width="2" height="1" fill="#8a8a8a"/>
<rect x="10" y="192.2" width="2" height="1" fill="#8a8a8a"/>
<rect x="10" y="196.2" width="2" height="1" fill="#8a8a8a"/>
<rect x="10" y="200.3" width="2" height="1" fill="#8a8a8a"/>
<rect x="7" y="204.3" width="5" height="1" fill="#8a8a8a"/>
<rect x="10" y="208.4" width="2" height="1" fill="#8a8a8a"/>
<rect x="10" y="212.4" width="2" height="1" fill="#8a8a8a"/>
<rect x="10" y="216.5" width="2" height="1" fill="#8a8a8a"/>
<rect x="10" y="220.5" width="2" height="1" fill="#8a8a8a"/>
<text x="1" y="192.6" font-size="8" fill="#c9c9c9" font-family="Liberation Sans">6</text>
<text x="1" y="200.6" font-size="8" fill="#c9c9c9" font-family="Liberation Sans">0</text>
<text x="1" y="208.6" font-size="8" fill="#c9c9c9" font-family="Liberation Sans">0</text>
<rect x="0" y="224.6" width="12" height="1" fill="#7a7a7a"/>
<rect x="10" y="228.6" width="2" height="1" fill="#8a8a8a"/>
<rect x="10" y="232.7" width="2" height="1" fill="#8a8a8a"/>
<rect x="10" y="236.7" width="2" height="1" fill="#8a8a8a"/>
<rect x="10" y="240.8" width="2" height="1" fill="#8a8a8a"/>
<rect x="7" y="244.8" width="5" height="1" fill="#8a8a8a"/>
<rect x="10" y="248.9" width="2" height="1" fill="#8a8a8a"/>
<rect x="10" y="252.9" width="2" height="1" fill="#8a8a8a"/>
<rect x="10" y="257.0" width="2" height="1" fill="#8a8a8a"/>
<rect x="10" y="261.0" width="2" height="1" fill="#8a8a8a"/>
<text x="1" y="233.1" font-size="8" fill="#c9c9c9" font-family="Liberation Sans">8</text>
<text x="1" y="241.1" font-size="8" fill="#c9c9c9" font-family="Liberation Sans">0</text>
<text x="1" y="249.1" font-size="8" fill="#c9c9c9" font-family="Liberation Sans">0</text>
<rect x="0" y="265.1" width="12" height="1" fill="#7a7a7a"/>
<rect x="10" y="269.2" width="2" height="1" fill="#8a8a8a"/>
<rect x="10" y="273.2" width="2" height="1" fill="#8a8a8a"/>
<rect x="10" y="277.3" width="2" height="1" fill="#8a8a8a"/>
<rect x="10" y="281.3" width="2" height="1" fill="#8a8a8a"/>
<rect x="7" y="285.4" width="5" height="1" fill="#8a8a8a"/>
<rect x="10" y="289.4" width="2" height="1" fill="#8a8a8a"/>
<rect x="10" y="293.5" width="2" height="1" fill="#8a8a8a"/>
<rect x="10" y="297.5" width="2" height="1" fill="#8a8a8a"/>
<rect x="10" y="301.6" width="2" height="1" fill="#8a8a8a"/>
<text x="1" y="273.6" font-size="8" fill="#c9c9c9" font-family="Liberation Sans">1</text>
<text x="1" y="281.6" font-size="8" fill="#c9c9c9" font-family="Liberation Sans">0</text>
<text x="1" y="289.6" font-size="8" fill="#c9c9c9" font-family="Liberation Sans">0</text>
<text x="1" y="297.6" font-size="8" fill="#c9c9c9" font-family="Liberation Sans">0</text>
<rect x="0" y="305.6" width="12" height="1" fill="#7a7a7a"/>
<rect x="10" y="309.7" width="2" height="1" fill="#8a8a8a"/>
<rect x="10" y="313.7" width="2" height="1" fill="#8a8a8a"/>
<rect x="10" y="317.8" width="2" height="1" fill="#8a8a8a"/>
<rect x="10" y="321.8" width="2" height="1" fill="#8a8a8a"/>
<rect x="7" y="325.9" width="5" height="1" fill="#8a8a8a"/>
<rect x="10" y="329.9" width="2" height="1" fill="#8a8a8a"/>
<rect x="10" y="334.0" width="2" height="1" fill="#8a8a8a"/>
<rect x="10" y="338.0" width="2" height="1" fill="#8a8a8a"/>
<rect x="10" y="342.1" width="2" height="1" fill="#8a8a8a"/>
<text x="1" y="314.1" font-size="8" fill="#c9c9c9" font-family="Liberation Sans">1</text>
<text x="1" y="322.1" font-size="8" fill="#c9c9c9" font-family="Liberation Sans">2</text>
<text x="1" y="330.1" font-size="8" fill="#c9c9c9" font-family="Liberation Sans">0</text>
<text x="1" y="338.1" font-size="8" fill="#c9c9c9" font-family="Liberation Sans">0</text>
<rect x="0" y="346.1" width="12" height="1" fill="#7a7a7a"/>
<rect x="10" y="350.2" width="2" height="1" fill="#8a8a8a"/>
<rect x="10" y="354.2" width="2" height="1" fill="#8a8a8a"/>
<rect x="10" y="358.3" width="2" height="1" fill="#8a8a8a"/>
<rect x="10" y="362.3" width="2" height="1" fill="#8a8a8a"/>
<rect x="7" y="366.4" width="5" height="1" fill="#8a8a8a"/>
<rect x="10" y="370.5" width="2" height="1" fill="#8a8a8a"/>
<rect x="10" y="374.5" width="2" height="1" fill="#8a8a8a"/>
<rect x="10" y="378.6" width="2" height="1" fill="#8a8a8a"/>
<rect x="10" y="382.6" width="2" height="1" fill="#8a8a8a"/>
<text x="1" y="354.6" font-size="8" fill="#c9c9c9" font-family="Liberation Sans">1</text>
<text x="1" y="362.6" font-size="8" fill="#c9c9c9" font-family="Liberation Sans">4</text>
<text x="1" y="370.6" font-size="8" fill="#c9c9c9" font-family="Liberation Sans">0</text>
<text x="1" y="378.6" font-size="8" fill="#c9c9c9" font-family="Liberation Sans">0</text>
<rect x="0" y="386.7" width="12" height="1" fill="#7a7a7a"/>
<rect x="10" y="390.7" width="2" height="1" fill="#8a8a8a"/>
<rect x="10" y="394.8" width="2" height="1" fill="#8a8a8a"/>
<rect x="10" y="398.8" width="2" height="1" fill="#8a8a8a"/>
<rect x="10" y="402.9" width="2" height="1" fill="#8a8a8a"/>
<rect x="7" y="406.9" width="5" height="1" fill="#8a8a8a"/>
<rect x="10" y="411.0" width="2" height="1" fill="#8a8a8a"/>
<rect x="10" y="415.0" width="2" height="1" fill="#8a8a8a"/>
<rect x="10" y="419.1" width="2" height="1" fill="#8a8a8a"/>
<rect x="10" y="423.1" width="2" height="1" fill="#8a8a8a"/>
<text x="1" y="395.2" font-size="8" fill="#c9c9c9" font-family="Liberation Sans">1</text>
<text x="1" y="403.2" font-size="8" fill="#c9c9c9" font-family="Liberation Sans">6</text>
<text x="1" y="411.2" font-size="8" fill="#c9c9c9" font-family="Liberation Sans">0</text>
<text x="1" y="419.2" font-size="8" fill="#c9c9c9" font-family="Liberation Sans">0</text>
<rect x="0" y="427.2" width="12" height="1" fill="#7a7a7a"/>
<rect x="10" y="431.2" width="2" height="1" fill="#8a8a8a"/>
<rect x="10" y="435.3" width="2" height="1" fill="#8a8a8a"/>
<rect x="10" y="439.3" width="2" height="1" fill="#8a8a8a"/>
<rect x="10" y="443.4" width="2" height="1" fill="#8a8a8a"/>
<rect x="7" y="447.4" width="5" height="1" fill="#8a8a8a"/>
<rect x="10" y="451.5" width="2" height="1" fill="#8a8a8a"/>
<rect x="10" y="455.5" width="2" height="1" fill="#8a8a8a"/>
<rect x="10" y="459.6" width="2" height="1" fill="#8a8a8a"/>
<rect x="10" y="463.6" width="2" height="1" fill="#8a8a8a"/>
<text x="1" y="435.7" font-size="8" fill="#c9c9c9" font-family="Liberation Sans">1</text>
<text x="1" y="443.7" font-size="8" fill="#c9c9c9" font-family="Liberation Sans">8</text>
<text x="1" y="451.7" font-size="8" fill="#c9c9c9" font-family="Liberation Sans">0</text>
<text x="1" y="459.7" font-size="8" fill="#c9c9c9" font-family="Liberation Sans">0</text>
<rect x="0" y="467.7" width="12" height="1" fill="#7a7a7a"/>
<rect x="10" y="471.8" width="2" height="1" fill="#8a8a8a"/>
<rect x="10" y="475.8" width="2" height="1" fill="#8a8a8a"/>
<rect x="10" y="479.9" width="2" height="1" fill="#8a8a8a"/>
<rect x="10" y="483.9" width="2" height="1" fill="#8a8a8a"/>
<rect x="7" y="488.0" width="5" height="1" fill="#8a8a8a"/>
<rect x="10" y="492.0" width="2" height="1" fill="#8a8a8a"/>
<rect x="10" y="496.1" width="2" height="1" fill="#8a8a8a"/>
<rect x="10" y="500.1" width="2" height="1" fill="#8a8a8a"/>
<rect x="10" y="504.2" width="2" height="1" fill="#8a8a8a"/>
<text x="1" y="476.2" font-size="8" fill="#c9c9c9" font-family="Liberation Sans">2</text>
<text x="1" y="484.2" font-size="8" fill="#c9c9c9" font-family="Liberation Sans">0</text>
<text x="1" y="492.2" font-size="8" fill="#c9c9c9" font-family="Liberation Sans">0</text>
<text x="1" y="500.2" font-size="8" fill="#c9c9c9" font-family="Liberation Sans">0</text>
<rect x="0" y="508.2" width="12" height="1" fill="#7a7a7a"/>
<rect x="10" y="512.3" width="2" height="1" fill="#8a8a8a"/>
<rect x="10" y="516.3" width="2" height="1" fill="#8a8a8a"/>
<rect x="10" y="520.4" width="2" height="1" fill="#8a8a8a"/>
<rect x="10" y="524.4" width="2" height="1" fill="#8a8a8a"/>
<rect x="7" y="528.5" width="5" height="1" fill="#8a8a8a"/>
<rect x="10" y="532.5" width="2" height="1" fill="#8a8a8a"/>
<rect x="10" y="536.6" width="2" height="1" fill="#8a8a8a"/>
<rect x="10" y="540.6" width="2" height="1" fill="#8a8a8a"/>
<rect x="10" y="544.7" width="2" height="1" fill="#8a8a8a"/>
<text x="1" y="516.7" font-size="8" fill="#c9c9c9" font-family="Liberation Sans">2</text>
<text x="1" y="524.7" font-size="8" fill="#c9c9c9" font-family="Liberation Sans">2</text>
<text x="1" y="532.7" font-size="8" fill="#c9c9c9" font-family="Liberation Sans">0</text>
<text x="1" y="540.7" font-size="8" fill="#c9c9c9" font-family="Liberation Sans">0</text>
<rect x="0" y="548.7" width="12" height="1" fill="#7a7a7a"/>
<rect x="10" y="552.8" width="2" height="1" fill="#8a8a8a"/>
<rect x="10" y="556.8" width="2" height="1" fill="#8a8a8a"/>
<rect x="10" y="560.9" width="2" height="1" fill="#8a8a8a"/>
<rect x="10" y="564.9" width="2" height="1" fill="#8a8a8a"/>
<rect x="7" y="569.0" width="5" height="1" fill="#8a8a8a"/>
<rect x="10" y="573.1" width="2" height="1" fill="#8a8a8a"/>
<rect x="10" y="577.1" width="2" height="1" fill="#8a8a8a"/>
<rect x="10" y="581.2" width="2" height="1" fill="#8a8a8a"/>
<rect x="10" y="585.2" width="2" height="1" fill="#8a8a8a"/>
<text x="1" y="557.2" font-size="8" fill="#c9c9c9" font-family="Liberation Sans">2</text>
<text x="1" y="565.2" font-size="8" fill="#c9c9c9" font-family="Liberation Sans">4</text>
<text x="1" y="573.2" font-size="8" fill="#c9c9c9" font-family="Liberation Sans">0</text>
<text x="1" y="581.2" font-size="8" fill="#c9c9c9" font-family="Liberation Sans">0</text>
<rect x="0" y="589.3" width="12" height="1" fill="#7a7a7a"/>
<rect x="10" y="593.3" width="2" height="1" fill="#8a8a8a"/>
<rect x="10" y="597.4" width="2" height="1" fill="#8a8a8a"/>
<rect x="10" y="601.4" width="2" height="1" fill="#8a8a8a"/>
<rect x="10" y="605.5" width="2" height="1" fill="#8a8a8a"/>
<rect x="7" y="609.5" width="5" height="1" fill="#8a8a8a"/>
<rect x="10" y="613.6" width="2" height="1" fill="#8a8a8a"/>
<rect x="10" y="617.6" width="2" height="1" fill="#8a8a8a"/>
<rect x="10" y="621.7" width="2" height="1" fill="#8a8a8a"/>
<rect x="10" y="625.7" width="2" height="1" fill="#8a8a8a"/>
<text x="1" y="597.8" font-size="8" fill="#c9c9c9" font-family="Liberation Sans">2</text>
<text x="1" y="605.8" font-size="8" fill="#c9c9c9" font-family="Liberation Sans">6</text>
<text x="1" y="613.8" font-size="8" fill="#c9c9c9" font-family="Liberation Sans">0</text>
<text x="1" y="621.8" font-size="8" fill="#c9c9c9" font-family="Liberation Sans">0</text>
<rect x="0" y="629.8" width="12" height="1" fill="#7a7a7a"/>
<rect x="10" y="633.8" width="2" height="1" fill="#8a8a8a"/>
<rect x="10" y="637.9" width="2" height="1" fill="#8a8a8a"/>
<rect x="10" y="641.9" width="2" height="1" fill="#8a8a8a"/>
<rect x="10" y="646.0" width="2" height="1" fill="#8a8a8a"/>
<rect x="7" y="650.0" width="5" height="1" fill="#8a8a8a"/>
<rect x="10" y="654.1" width="2" height="1" fill="#8a8a8a"/>
<rect x="10" y="658.1" width="2" height="1" fill="#8a8a8a"/>
<rect x="10" y="662.2" width="2" height="1" fill="#8a8a8a"/>
<rect x="10" y="666.2" width="2" height="1" fill="#8a8a8a"/>
<text x="1" y="638.3" font-size="8" fill="#c9c9c9" font-family="Liberation Sans">2</text>
<text x="1" y="646.3" font-size="8" fill="#c9c9c9" font-family="Liberation Sans">8</text>
<text x="1" y="654.3" font-size="8" fill="#c9c9c9" font-family="Liberation Sans">0</text>
<text x="1" y="662.3" font-size="8" fill="#c9c9c9" font-family="Liberation Sans">0</text>
<rect x="0" y="670.3" width="12" height="1" fill="#7a7a7a"/>
<rect x="10" y="674.4" width="2" height="1" fill="#8a8a8a"/>
<rect x="10" y="678.4" width="2" height="1" fill="#8a8a8a"/>
<rect x="10" y="682.5" width="2" height="1" fill="#8a8a8a"/>
<rect x="10" y="686.5" width="2" height="1" fill="#8a8a8a"/>
<rect x="7" y="690.6" width="5" height="1" fill="#8a8a8a"/>
<rect x="10" y="694.6" width="2" height="1" fill="#8a8a8a"/>
<rect x="10" y="698.7" width="2" height="1" fill="#8a8a8a"/>
<rect x="10" y="702.7" width="2" height="1" fill="#8a8a8a"/>
<rect x="10" y="706.8" width="2" height="1" fill="#8a8a8a"/>
<text x="1" y="678.8" font-size="8" fill="#c9c9c9" font-family="Liberation Sans">3</text>
<text x="1" y="686.8" font-size="8" fill="#c9c9c9" font-family="Liberation Sans">0</text>
<text x="1" y="694.8" font-size="8" fill="#c9c9c9" font-family="Liberation Sans">0</text>
<text x="1" y="702.8" font-size="8" fill="#c9c9c9" font-family="Liberation Sans">0</text>
<rect x="0" y="710.8" width="12" height="1" fill="#7a7a7a"/>
<rect x="10" y="714.9" width="2" height="1" fill="#8a8a8a"/>
<rect x="10" y="718.9" width="2" height="1" fill="#8a8a8a"/>
<rect x="10" y="723.0" width="2" height="1" fill="#8a8a8a"/>
<rect x="10" y="727.0" width="2" height="1" fill="#8a8a8a"/>
<rect x="7" y="731.1" width="5" height="1" fill="#8a8a8a"/>
<text x="1" y="719.3" font-size="8" fill="#c9c9c9" font-family="Liberation Sans">3</text>
<text x="1" y="727.3" font-size="8" fill="#c9c9c9" font-family="Liberation Sans">2</text></svg>
</div>
<div class="a" style="left:12px;top:57px;width:1px;height:733px;background:#2a2a2a"></div>

<!-- ===== canvas ===== -->
<div class="a" style="left:197px;top:118px;width:813px;height:611px;background:#000"></div>
<div class="a" id="doc" style="left:198px;top:119px;width:811px;height:609px;background:#fff;overflow:hidden">
<svg style="left:-198px;top:-119px" width="1500" height="800" viewBox="0 0 1500 800">
<defs>
<style>
.bl{fill:#3b8ad9}.bs{stroke:#3b8ad9;stroke-linecap:round;fill:none}
.or{fill:#f2a83b}.os{stroke:#f2a83b;stroke-linecap:round;fill:none}
.lb{fill:#c5dcf2}.lbs{stroke:#c5dcf2;stroke-linecap:round;fill:none}
.pe{fill:#fbe2c4}
.nv{stroke:#141936;fill:none;stroke-linecap:round;stroke-linejoin:round}
</style>
</defs>
<g id="g37">
<!-- ===== LEFT BLUE MANNEQUIN ===== -->
<path class="bl" d="M356,163.5 Q372,162 391,163.5 Q395,164 394.5,169 L390,214 Q389.5,219 384,219.5 L362,219.5 Q357,219.5 356.5,214 L352,169 Q352,164 356,163.5 Z"/>
<rect class="bl" x="371" y="216" width="6" height="22"/>
<path class="bl" d="M344,237 L405,234 L413,336 L345,336 Z"/>
<rect class="bl" x="373" y="334" width="7" height="19"/>
<path class="bl" d="M349,351 L415,352 L414,362 Q402,386 381,386 Q360,386 349,362 Z"/>
<path class="bs" d="M336,252 L313,322" stroke-width="13"/>
<path class="bs" d="M420,252 L440,307" stroke-width="12"/>
<path class="bs" d="M311,336 L302,392" stroke-width="12"/>
<path class="bs" d="M444,326 L460,388" stroke-width="12"/>
<path class="bs" d="M343,386 Q346,440 355,500" stroke-width="16"/>
<path class="bs" d="M422,384 Q421,450 411,497" stroke-width="15"/>
<path class="bs" d="M357,523 L367,611" stroke-width="15"/>
<path class="bs" d="M411,523 L399,612" stroke-width="13"/>
<!-- hands -->
<path class="bl" d="M293.4,403.4 L310.9,410.4 L318.7,425.2 L315.2,433.1 L312.6,431.4 L311.7,426.1 L306.5,424.4 L305.6,430.5 L283.7,425.2 L288.1,409.5 Z"/>
<path class="bs" d="M284,431 L284.5,436 M288.5,434.5 L288.8,441.5 M295,436.5 L295.3,445.5 M301.2,437.5 L302,446.5" stroke-width="3.8"/>
<path class="os" d="M284,427 L304.7,437" stroke-width="5.5"/>
<path class="bl" d="M450.7,400.1 L472.6,398.8 L478.7,408.9 L479.6,415 L456.9,422 L452.5,418.5 L444.6,416.7 L445.5,408.9 Z"/>
<path class="bs" d="M445,420 L452,430 M460.4,429 L461.2,440 M466.5,428 L469,437.5 M472.6,427 L474.4,434 M479.6,423.7 L483,433" stroke-width="4.2"/>
<path class="os" d="M457,424.5 L481,418.5" stroke-width="6"/>
<!-- feet -->
<path class="bl" d="M321,638 L355,625 L378,627 L381,639 L360,642 L325,642 Z"/>
<path class="os" d="M329,635 L343,644" stroke-width="3.5"/>
<path class="bl" d="M394,630 L415,628 L440,633 L444,639 L420,643 L396,643 Z"/>
<path class="os" d="M428,642 L432,633" stroke-width="4"/>
<!-- joints -->
<circle class="or" cx="342" cy="241" r="11.5"/>
<ellipse class="or" cx="414" cy="243" rx="11" ry="8.5" transform="rotate(30 414 243)"/>
<circle class="or" cx="312.5" cy="324" r="10.5"/>
<circle class="or" cx="442.5" cy="315" r="10.5"/>
<ellipse class="or" cx="302" cy="398" rx="7.5" ry="5.5" transform="rotate(20 302 398)"/>
<circle class="or" cx="460" cy="396" r="8"/>
<circle class="or" cx="340" cy="370" r="14"/>
<circle class="or" cx="423" cy="368" r="12.5"/>
<circle class="or" cx="355" cy="508" r="11"/>
<circle class="or" cx="411.5" cy="507" r="11"/>
<ellipse class="or" cx="369" cy="618" rx="8.5" ry="4.5"/>
<ellipse class="or" cx="400" cy="625" rx="9" ry="5.5"/>

</g>
<g id="g36">
<!-- ===== MIDDLE FIGURE ===== -->
<!-- light blue skeleton -->
<ellipse class="lb" cx="633" cy="183" rx="24" ry="24"/>
<path class="lb" d="M614,200 L654,200 L652,230 L626,234 Z"/>
<path class="lb" d="M598,240 L636,238 Q672,240 676,290 Q676,330 640,334 L600,336 Z"/>
<path class="lb" d="M604,355 Q606,385 640,387 Q672,385 676,355 Z"/>
<path class="lbs" d="M680,252 L700,312" stroke-width="14"/>
<path class="lbs" d="M704,326 L720,392" stroke-width="13"/>
<path class="lb" d="M708,402 L728,398 L740,412 L742,424 L722,428 L710,424 Z"/>
<path class="lbs" d="M712,424 L712,437 M718,426 L719,439 M725,426 L727,438 M732,425 L735,435 M739,422 L742,432" stroke-width="4"/>
<path class="lbs" d="M683,382 L672,495" stroke-width="12"/>
<path class="lbs" d="M672,520 L659,618" stroke-width="12"/>
<path class="lb" d="M655,628 L680,630 L702,633 L702,638 L660,640 Z"/>
<path class="lb" d="M598,630 L625,620 L640,628 L640,640 L598,640 Z"/>
<path class="lbs" d="M634,520 L636,600" stroke-width="10"/>
<path class="lb" d="M600,300 L640,298 L640,385 L598,385 Z" opacity="0.9"/><path fill="#ffffff" d="M641,300 L674,325 Q668,332 642,334 Z" opacity="0.85"/>
<!-- peach joints -->
<circle class="pe" cx="702" cy="316" r="10.5"/>
<circle class="pe" cx="684" cy="369" r="11"/>
<circle class="pe" cx="672" cy="506" r="10"/>
<ellipse class="pe" cx="661" cy="627" rx="7" ry="5"/>
<ellipse class="pe" cx="718" cy="400" rx="8" ry="6"/>
<ellipse class="pe" cx="572" cy="324" rx="8" ry="8"/>
<circle class="pe" cx="617" cy="509" r="9"/>
<path class="lbs" d="M549,428 L548,440 M555,430 L555,442 M561,430 L562,441 M567,428 L569,438" stroke-width="3.5"/><ellipse class="pe" cx="558" cy="431" rx="10" ry="4"/>
<ellipse class="pe" cx="690" cy="633" rx="6" ry="4"/>
<ellipse class="pe" cx="678" cy="246" rx="7" ry="7"/>
</g>
<g id="g38">
<!-- colored muscles -->
<path fill="#1b2b9e" d="M581,240 L590,233 L606,231 L602,246 L594,259 L590,272 L579,275 L578,258 Z"/>
<path fill="#3c8b3b" d="M590,252 L602,242 L626,231 L634,238 L634,291 L605,292 L599,275 Z"/>
<path fill="#a74f1d" d="M575,276 L590,273 L597,270 L588,315 L572,316 Z"/>
<path fill="#d9872f" d="M564,331 Q578,332 582,346 Q583,372 578,392 Q572,402 562,399 Q555,380 556,356 Q557,338 564,331 Z"/>
<path fill="#b0703f" d="M604,309 L616,306 L627,340 L625,368 L610,366 Z"/>
<path fill="#c0571f" d="M623,299 L636,296 L638,380 L626,381 Z"/>
<path fill="#974f1d" d="M585,390 Q590,380 605,382 Q625,385 628,420 L630,470 Q628,492 612,493 Q600,492 597,470 Z"/>
<path fill="#e8813a" d="M620,392 L631,393 L632,490 L624,490 Z"/>
<ellipse fill="#4cb83d" cx="629" cy="555" rx="15" ry="30"/>
<path fill="#2e4acc" d="M626,580 L636,580 L635,620 L628,620 Z"/>
</g>
<g id="g39">
<!-- navy outlines -->
<ellipse class="nv" cx="634" cy="178" rx="28.5" ry="23.5" stroke-width="2.76"/>
<ellipse cx="633" cy="176" rx="25" ry="20" fill="none" stroke="#2b3b2b" stroke-width="1.72"/>
<circle class="nv" cx="637.5" cy="203" r="16" stroke-width="2.30"/>
<path class="nv" d="M622,210 L628,240 M650,212 L646,240 M626,240 L648,240" stroke-width="2.07"/>
<path d="M632,160 L633,230 M640,200 L641,240" stroke="#2a3a2a" stroke-width="1.38" fill="none"/>
<path class="nv" d="M596,239 L628,233" stroke-width="3.45"/>
<path class="nv" d="M636,243 Q672,238 676,290 Q676,330 642,334" stroke-width="2.76"/>
<circle class="nv" cx="678" cy="245" r="9" stroke-width="2.53"/>
<path class="nv" d="M641,386 L641,399 M635,398 L647,398" stroke-width="2.30"/><path d="M640,243 L642,292 M637,296 L645,304 M645,296 L638,304" stroke="#1f3a2c" stroke-width="1.2" fill="none"/>
<path d="M638,240 L638,300" stroke="#1f3a2a" stroke-width="1.49" fill="none"/>
<ellipse class="nv" cx="640" cy="356" rx="37" ry="5" stroke-width="2.30"/>
<path class="nv" d="M603,357 Q606,386 640,388 Q672,386 677,357" stroke-width="2.30"/>
<path class="nv" d="M598,268 Q600,320 604,350 Q602,372 592,392" stroke-width="2.76"/>
<path class="nv" d="M590,383 Q582,400 586,430 Q592,470 606,494 L626,494 M633,384 L634,492" stroke-width="2.53"/>
<circle class="nv" cx="619" cy="508" r="9" stroke-width="2.30"/>
<path class="nv" d="M610,516 Q616,570 624,610 L627,620 M634,492 Q648,530 646,562" stroke-width="2.8"/>
<path class="nv" d="M592,638 L627,614" stroke-width="2.76"/>
<path class="nv" d="M644,590 L640,636" stroke-width="2.6"/>
<!-- tablet -->
<rect x="546" y="405" width="24" height="22" fill="#c8ddf2" stroke="#141936" stroke-width="2.99"/>
<path class="nv" d="M566,408 L566,426" stroke-width="1.38"/>
<!-- annotations -->
<path class="nv" d="M575,217 Q580,226 589,234 M583,233 L589,234 L588,228" stroke-width="1.61"/>
<path class="nv" d="M589,236 Q578,238 571,252 Q566,262 564,269 M554,266 L564,269 Q562,280 554,291 Q549,304 552,314 Q556,319 563,319" stroke-width="1.72"/>
<path class="nv" d="M536,274 Q538,260 551,259 M547,256 L551,259 L547,262" stroke-width="1.49"/>
<path class="nv" d="M555,330 Q545,335 549,352 Q553,364 543,372 Q540,384 548,388 L554,390" stroke-width="1.72"/>
<ellipse cx="578" cy="319.5" rx="8.5" ry="3.2" fill="none" stroke="#141936" stroke-width="2.07"/>
<text x="0" y="0" font-family="Liberation Serif" font-style="italic" font-size="16" fill="#141936" transform="translate(526,272) rotate(-62)" letter-spacing="-0.5">плечи</text>
<text x="0" y="0" font-family="Liberation Serif" font-style="italic" font-size="16" fill="#141936" transform="translate(513,382) rotate(-62)" letter-spacing="-1">предплечье</text>
<!-- ===== LEFT SKETCH LEGS ===== -->
<path class="nv" d="M486,493 L482,515 Q486,560 490,600 L494,652" stroke-width="4.14"/>
<path class="nv" d="M489,494 L478,520" stroke-width="2.88"/>
<path class="nv" d="M515,500 Q526,550 513,580 Q507,620 520,655" stroke-width="2.99"/>
<path class="nv" d="M488,652 L522,656 M490,658 Q505,665 520,662" stroke-width="2.76"/>
<path d="M466,502 L540,576 M479,635 L521,607" stroke="#3a55d2" stroke-width="4.02" stroke-linecap="round"/>
<path class="nv" d="M560,502 Q545,545 552,587 Q558,605 570,615" stroke-width="2.76"/>
<path class="nv" d="M582,499 Q596,545 590,585 Q587,605 580,620" stroke-width="2.76"/>
<path class="nv" d="M555,560 L585,512" stroke-width="2.30"/>
<path class="nv" d="M551,599 L585,632" stroke-width="2.30"/>
<path class="nv" d="M566,620 L562,665 L591,660 L590,622" stroke-width="2.99"/>
<!-- ===== RIGHT SKETCHES ===== -->
<ellipse class="nv" cx="778" cy="186" rx="33" ry="27" stroke-width="2.99"/>
<path class="nv" d="M810,198 Q822,210 818,224 Q810,235 795,232 Q782,228 782,212" stroke-width="2.53"/>
<!-- hand box sketch -->
<g fill="none" stroke-linecap="round" stroke-linejoin="round">
<path d="M804,370 Q802,330 808,316 Q816,302 826,305 Q836,310 842,338" stroke="#1f3a2c" stroke-width="1.84"/>
<path d="M811,310 L813,348 M818,306 L825,348 M823,309 L836,344 M812,352 L842,346" stroke="#1f3a2c" stroke-width="1.38"/>
<path d="M783,352 Q786,338 792,341 Q796,346 792,356 L808,363 M783,352 L785,368 L812,390" stroke="#1f3a2c" stroke-width="1.84"/>
<path d="M824,332 L864,340 L850,382 L815,377 Z" stroke="#141936" stroke-width="3.22"/>
<path d="M817,384 L850,388 M843,342 L858,372 M820,340 L850,352" stroke="#1f3a2c" stroke-width="1.38"/>
<path d="M858,358 Q878,350 882,390 L874,398 M854,372 Q868,362 874,398" stroke="#141936" stroke-width="2.53"/>
<path d="M826,390 L832,438 M844,388 L852,434" stroke="#1f3a2c" stroke-width="2.30"/>
<path d="M810,392 L822,396 L818,406 L806,402 Z M806,408 L816,410 L813,424 L804,422 Z M808,430 L810,438" stroke="#141936" stroke-width="2.53"/>
<path d="M862,394 L876,398 L870,410 L858,414 M856,420 Q862,412 866,418" stroke="#141936" stroke-width="2.30"/>
</g>
<path class="nv" d="M920,352 Q945,346 954,360 Q955,375 930,397 M920,352 Q912,370 914,390 Q922,386 930,397" stroke-width="2.53"/>
</g>

<g id="g39b">
<!-- bent leg -->
<path class="nv" d="M778,460 Q840,465 880,490 Q900,505 907,530" stroke-width="2.99"/>
<path class="nv" d="M762,467 Q745,466 747,500 M762,468 L868,508" stroke-width="2.76"/>
<path class="nv" d="M742,513 L845,537" stroke-width="2.53"/>
<ellipse class="nv" cx="866" cy="528" rx="12" ry="15" stroke-width="2.53"/>
<circle class="nv" cx="886" cy="538" r="15" stroke-width="2.53"/>
<path class="nv" d="M900,530 L908,532 L906,552 L898,550 Z" stroke-width="2.30"/>
<ellipse class="nv" cx="883" cy="550" rx="20" ry="5" stroke-width="2.30"/>
<path class="nv" d="M863,550 L863,646 L888,646 M905,540 L888,646" stroke-width="2.99"/>
<path class="nv" d="M888,648 Q905,668 918,674 L935,680 L945,688 L938,694 Q920,695 900,692 L865,690 Q850,688 857,672" stroke-width="2.99"/>
</g>
<g id="g38b">
<!-- blue calf + orange muscle -->
<path fill="#2e4acc" d="M726,527 Q740,518 752,528 Q763,545 760,572 Q752,600 748,617 L733,617 Q728,590 727,560 Z"/>
<path fill="#ec8036" d="M772,482 Q774,468 782,468 Q789,470 790,482 Q792,468 800,468 Q808,470 806,486 Q806,530 801,570 L795,578 L786,574 L778,578 Q773,540 772,500 Z"/>
<path d="M776,574 Q782,610 788,648 M802,574 Q800,615 797,655" stroke="#ec8036" stroke-width="3" fill="none" stroke-linecap="round"/>
<path d="M770,466 Q770,520 776,572 M807,465 Q810,520 803,570" stroke="#ec8036" stroke-width="1.3" fill="none"/>
</g>

</svg>

</div>
<div class="a" style="left:635.5px;top:57px;width:1px;height:733px;background:#6fcfdc"></div>

<!-- ===== scrollbars ===== -->
<div class="a" style="left:157px;top:790px;width:1040px;height:10px;background:#555555"></div>
<div class="a" style="left:157px;top:790px;width:30px;height:10px;background:#5e5e5e"></div>
<svg style="left:176px;top:791px" width="8" height="9"><path d="M2 1 L5 5 L2 9" stroke="#c8c8c8" stroke-width="1.2" fill="none"/></svg>
<div class="a" style="left:1197px;top:43px;width:13px;height:757px;background:#565656"></div>
<div class="a" style="left:1197px;top:790px;width:13px;height:10px;background:#5a5a5a"></div>

<!-- ===== right panels ===== -->
<div class="a" style="left:1210px;top:19px;width:290px;height:781px;background:#3f3f3f"></div>
<div class="a" style="left:1212px;top:19px;width:288px;height:10px;background:#484848"></div>
<svg style="left:1230px;top:21px" width="10" height="7"><path d="M4 1 L1 3.5 L4 6Z M8 1 L5 3.5 L8 6Z" fill="#cfcfcf"/></svg>
<div class="a" id="toolcol" style="left:1212px;top:29px;width:30px;height:771px;background:#5c5c5c"></div>

<!-- color panel -->
<div class="a" style="left:1245px;top:29px;width:255px;height:315px;background:#5d5d5d"></div>
<div class="a" style="left:1245px;top:29px;width:255px;height:22px;background:#4a4a4a"></div>
<div class="a" style="left:1245px;top:29px;width:35px;height:22px;background:#5d5d5d"></div>
<div class="a" style="left:1331px;top:29px;width:1px;height:22px;background:#444"></div>
<div class="t" style="left:1252px;top:36px;font-size:9.5px;font-weight:bold;color:#f0f0f0">Цвет</div>
<div class="t" style="left:1287px;top:36px;font-size:9.5px;font-weight:bold;color:#b4b4b4;transform:scaleX(0.9);transform-origin:0 0">Образцы</div>
<div class="a" style="left:1261px;top:69px;width:16px;height:16px;background:#5b5a3c;border:1.5px solid #e6e2c8;outline:1px solid #474747"></div>
<div class="a" style="left:1252.5px;top:60.5px;width:16px;height:16px;background:#2d4fe6;border:1.5px solid #d8d8e0;outline:1px solid #474747"></div>
<svg style="left:1250px;top:102px" width="12" height="11"><path d="M6 0.5 L11.5 10.5 L0.5 10.5Z" fill="#eeeeee"/><rect x="5.3" y="3.5" width="1.4" height="4" fill="#5d5d5d"/><rect x="5.3" y="8.3" width="1.4" height="1.3" fill="#5d5d5d"/></svg>
<div class="a" style="left:1264px;top:103px;width:11px;height:11px;background:#2f4cc0;border:1.3px solid #dcdcdc"></div>
<div class="a" style="left:1281px;top:58px;width:197px;height:281px;background:linear-gradient(to bottom, rgba(0,0,0,0), #000), linear-gradient(to right, #fff, #0a2cff)"></div>
<svg style="left:1426px;top:93px" width="10" height="10"><circle cx="5" cy="5" r="4.3" stroke="#e8e8f4" stroke-width="1.3" fill="none"/></svg>
<div class="a" style="left:1490px;top:58px;width:10px;height:281px;background:linear-gradient(to bottom,#f03a20 0%,#f040f0 14%,#3030ff 30%,#2050ff 40%,#40e0f0 52%,#40d040 68%,#f0e040 84%,#f05020 100%)"></div>
<svg style="left:1484px;top:146px" width="6" height="8"><path d="M0 4 L3 0.5 L6 0.5 L6 7.5 L3 7.5Z" fill="#f4f4f4"/></svg>

<!-- layers panel -->
<div class="a" style="left:1245px;top:344px;width:255px;height:456px;background:#5d5d5d"></div>
<div class="a" style="left:1245px;top:344px;width:255px;height:24px;background:#4a4a4a"></div>
<div class="a" style="left:1245px;top:344px;width:35px;height:24px;background:#5d5d5d"></div>
<div class="a" style="left:1280px;top:346px;width:51px;height:22px;background:#4e4e4e"></div>
<div class="a" style="left:1331px;top:346px;width:56px;height:22px;background:#4e4e4e;border-left:1px solid #444;border-right:1px solid #444"></div>
<div class="t" style="left:1251px;top:352px;font-size:9.5px;font-weight:bold;color:#f0f0f0">Слои</div>
<div class="t" style="left:1288px;top:352px;font-size:9.5px;font-weight:bold;color:#b4b4b4;transform:scaleX(0.9);transform-origin:0 0">История</div>
<div class="t" style="left:1338px;top:352px;font-size:9.5px;font-weight:bold;color:#b4b4b4;transform:scaleX(0.9);transform-origin:0 0">Операции</div>

<div class="box" style="left:1248px;top:377px;width:99px;height:13px;background:#4b4b4b;border-radius:1px"></div>
<svg style="left:1252px;top:378px" width="10" height="11"><circle cx="6" cy="4.5" r="3" stroke="#e0e0e0" stroke-width="1.3" fill="none"/><path d="M4 6.5 L1 9.5" stroke="#e0e0e0" stroke-width="1.6"/></svg>
<div class="t" style="left:1266px;top:380px;font-size:9px;font-weight:bold;color:#e8e8e8;transform:scaleX(0.87);transform-origin:0 0">Вид</div>
<div class="chev" style="left:1339px;top:380px;width:5px;height:5px"></div>
<svg style="left:1383px;top:377px" width="95" height="14">
 <rect x="1.5" y="1.5" width="9" height="9" fill="none" stroke="#e0e0e0" stroke-width="1.2"/><path d="M3 9 L5 6 L7 8 L9 5 L9.5 9Z" fill="#e0e0e0"/>
 <circle cx="25" cy="6.5" r="4.5" fill="none" stroke="#e0e0e0" stroke-width="1.2"/><path d="M25 2 A4.5 4.5 0 0 0 25 11 Z" transform="rotate(45 25 6.5)" fill="#e0e0e0"/>
 <path d="M40 2 L49 2 L49 4 M44.5 2 L44.5 11 M42.5 11 L46.5 11 M40 2 L40 4" stroke="#e0e0e0" stroke-width="1.6" fill="none"/>
 <rect x="61" y="2.5" width="8" height="8" fill="none" stroke="#e0e0e0" stroke-width="1.2"/><rect x="59.5" y="1" width="3" height="3" fill="#e0e0e0"/><rect x="67.5" y="1" width="3" height="3" fill="#e0e0e0"/><rect x="59.5" y="9" width="3" height="3" fill="#e0e0e0"/><rect x="67.5" y="9" width="3" height="3" fill="#e0e0e0"/>
 <path d="M82 1.5 L86 1.5 L88.5 4 L88.5 11 L82 11Z" fill="#e0e0e0"/><rect x="80" y="6" width="5" height="5" fill="#e0e0e0" stroke="#5d5d5d" stroke-width="0.8"/>
</svg>
<div class="a" style="left:1245px;top:393px;width:255px;height:1px;background:#535353"></div>
<div class="box" style="left:1248px;top:399px;width:153px;height:13px;background:#4b4b4b"></div>
<div class="t" style="left:1254px;top:401px;font-size:9px;font-weight:bold;color:#e8e8e8;transform:scaleX(0.84);transform-origin:0 0">Обычные</div>
<div class="chev" style="left:1393px;top:402px;width:5px;height:5px"></div>
<div class="t" style="left:1407px;top:401px;font-size:9px;color:#d0d0d0;-webkit-text-stroke:0.2px currentColor;transform:scaleX(0.9);transform-origin:0 0">Непрозрачность:</div>
<div class="box" style="left:1475px;top:399px;width:25px;height:13px;background:#4b4b4b"></div>
<div class="t" style="left:1477px;top:401px;font-size:9px;color:#e8e8e8">100%</div>
<div class="a" style="left:1245px;top:416px;width:255px;height:1px;background:#535353"></div>
<div class="t" style="left:1249px;top:423px;font-size:9px;color:#d0d0d0;-webkit-text-stroke:0.2px currentColor;transform:scaleX(0.9);transform-origin:0 0">Закрепить:</div>
<svg style="left:1298px;top:420px" width="86" height="14">
 <rect x="1" y="1.5" width="10" height="10" fill="#e6e6e6"/><rect x="3" y="3.5" width="2" height="2" fill="#5d5d5d"/><rect x="7" y="3.5" width="2" height="2" fill="#5d5d5d"/><rect x="5" y="5.5" width="2" height="2" fill="#5d5d5d"/><rect x="3" y="7.5" width="2" height="2" fill="#5d5d5d"/><rect x="7" y="7.5" width="2" height="2" fill="#5d5d5d"/>
 <path d="M28 1 L22 8" stroke="#e6e6e6" stroke-width="2"/><path d="M19 12 Q19.5 8.5 22 8 Q23.5 9 22.5 10.5 Q21 12 19 12Z" fill="#e6e6e6"/>
 <path d="M41 1 L41 12 M35.5 6.5 L46.5 6.5" stroke="#e6e6e6" stroke-width="1.4"/><path d="M41 0 L39 2.5 L43 2.5Z M41 13 L39 10.5 L43 10.5Z M34.5 6.5 L37 4.5 L37 8.5Z M47.5 6.5 L45 4.5 L45 8.5Z" fill="#e6e6e6"/>
 <path d="M54 3 L63 3 L63 12 M56 1 L56 10 L65 10" stroke="#e6e6e6" stroke-width="1.4" fill="none"/><path d="M56 10 L63 3" stroke="#e6e6e6" stroke-width="1"/>
 <rect x="73" y="5.5" width="9" height="7" fill="#e6e6e6"/><path d="M75 6 L75 3.5 A2.5 2.5 0 0 1 80 3.5 L80 6" stroke="#e6e6e6" stroke-width="1.4" fill="none"/><rect x="77" y="8" width="1.2" height="2.5" fill="#5d5d5d"/>
</svg>
<div class="t" style="left:1438px;top:423px;font-size:9px;color:#d0d0d0;-webkit-text-stroke:0.2px currentColor;transform:scaleX(0.88);transform-origin:0 0">Заливка:</div>
<div class="box" style="left:1475px;top:421px;width:25px;height:13px;background:#4b4b4b"></div>
<div class="t" style="left:1477px;top:423px;font-size:9px;color:#e8e8e8">100%</div>
<div class="a" style="left:1245px;top:439px;width:255px;height:1px;background:#535353"></div>

<!-- layer rows -->
<div class="a" style="left:1270px;top:440px;width:1px;height:343px;background:#535353"></div>
<div class="a" style="left:1245px;top:510px;width:255px;height:1px;background:#535353"></div>
<div class="a" style="left:1245px;top:580px;width:255px;height:1px;background:#535353"></div>
<div class="a" style="left:1271px;top:651px;width:229px;height:70px;background:#6f6f6f"></div>
<div class="a" style="left:1245px;top:651px;width:255px;height:1px;background:#535353"></div>
<div class="a" style="left:1245px;top:721px;width:255px;height:1px;background:#535353"></div>
<div class="a" style="left:1245px;top:783px;width:255px;height:17px;background:#5a5a5a;border-top:1px solid #535353"></div>

<div class="a" style="left:1252px;top:471px;width:10px;height:10px;border:1px solid #545454"></div>
<div class="a" style="left:1252px;top:541px;width:10px;height:10px;border:1px solid #545454"></div>

<div class="a ck" style="left:1273px;top:451px;width:64px;height:48px"></div>
<div class="t" style="left:1345px;top:472px;font-size:9px;color:#e4e4e4;transform:scaleX(0.87);transform-origin:0 0">Слой 36</div>
<div class="a ck" style="left:1273px;top:516px;width:64px;height:59px"></div>
<svg style="left:1273px;top:516px" width="64" height="59"><rect x="10.0" y="8.1" width="2.1" height="1.2" fill="#4a1a14"/><rect x="13.3" y="8.3" width="3.0" height="1.2" fill="#4a1a14"/><rect x="17.0" y="8.7" width="1.5" height="1.2" fill="#4a1a14"/><rect x="19.5" y="9.0" width="2.1" height="1.2" fill="#4a1a14"/><rect x="23.1" y="8.0" width="3.6" height="1.2" fill="#4a1a14"/><rect x="28.4" y="8.3" width="1.9" height="1.2" fill="#4a1a14"/><rect x="32.5" y="8.5" width="2.8" height="1.2" fill="#4a1a14"/><rect x="37.2" y="8.5" width="1.7" height="1.2" fill="#4a1a14"/><rect x="40.5" y="7.1" width="2.3" height="1.2" fill="#4a1a14"/><rect x="14.0" y="14.4" width="2.7" height="1.2" fill="#4a1a14"/><rect x="18.9" y="14.8" width="3.3" height="1.2" fill="#4a1a14"/><rect x="23.5" y="13.9" width="3.5" height="1.2" fill="#4a1a14"/><rect x="29.4" y="13.2" width="3.7" height="1.2" fill="#4a1a14"/><rect x="33.9" y="14.9" width="2.0" height="1.2" fill="#4a1a14"/><rect x="37.3" y="13.6" width="3.1" height="1.2" fill="#4a1a14"/><rect x="41.9" y="13.7" width="2.5" height="1.2" fill="#4a1a14"/><rect x="46.0" y="14.8" width="3.0" height="1.2" fill="#4a1a14"/><rect x="18.0" y="20.7" width="3.8" height="1.2" fill="#4a1a14"/><rect x="24.3" y="19.3" width="3.2" height="1.2" fill="#4a1a14"/><rect x="29.7" y="20.8" width="3.9" height="1.2" fill="#4a1a14"/><rect x="35.3" y="19.4" width="3.3" height="1.2" fill="#4a1a14"/><rect x="40.7" y="19.6" width="2.9" height="1.2" fill="#4a1a14"/><rect x="14.0" y="27.0" width="3.6" height="1.2" fill="#4a1a14"/><rect x="18.3" y="25.8" width="3.5" height="1.2" fill="#4a1a14"/><rect x="22.6" y="26.5" width="2.2" height="1.2" fill="#4a1a14"/><rect x="27.1" y="26.2" width="1.6" height="1.2" fill="#4a1a14"/><rect x="29.3" y="25.7" width="3.3" height="1.2" fill="#4a1a14"/><rect x="34.9" y="26.0" width="4.0" height="1.2" fill="#4a1a14"/><rect x="41.3" y="25.2" width="2.3" height="1.2" fill="#4a1a14"/><rect x="45.3" y="25.4" width="1.6" height="1.2" fill="#4a1a14"/><rect x="48.2" y="25.3" width="3.0" height="1.2" fill="#4a1a14"/><rect x="20.0" y="31.6" width="3.7" height="1.2" fill="#4a1a14"/><rect x="26.1" y="31.8" width="3.7" height="1.2" fill="#4a1a14"/><rect x="31.2" y="32.3" width="2.8" height="1.2" fill="#4a1a14"/><rect x="35.7" y="32.2" width="2.9" height="1.2" fill="#4a1a14"/><rect x="41.0" y="31.9" width="2.8" height="1.2" fill="#4a1a14"/><rect x="45.7" y="31.6" width="2.1" height="1.2" fill="#4a1a14"/><rect x="12.0" y="40.1" width="2.8" height="1.2" fill="#4a1a14"/><rect x="15.3" y="40.2" width="2.5" height="1.2" fill="#4a1a14"/><rect x="18.4" y="40.3" width="3.0" height="1.2" fill="#4a1a14"/><rect x="22.1" y="39.9" width="3.1" height="1.2" fill="#4a1a14"/><rect x="27.0" y="40.4" width="2.4" height="1.2" fill="#4a1a14"/><rect x="31.3" y="39.1" width="1.6" height="1.2" fill="#4a1a14"/><rect x="34.8" y="39.5" width="3.9" height="1.2" fill="#4a1a14"/><rect x="40.1" y="39.6" width="3.0" height="1.2" fill="#4a1a14"/><rect x="44.3" y="39.7" width="2.3" height="1.2" fill="#4a1a14"/><rect x="48.3" y="39.8" width="2.3" height="1.2" fill="#4a1a14"/><rect x="16.0" y="46.1" width="1.6" height="1.2" fill="#4a1a14"/><rect x="19.5" y="45.4" width="2.3" height="1.2" fill="#4a1a14"/><rect x="23.9" y="45.4" width="2.1" height="1.2" fill="#4a1a14"/><rect x="27.4" y="45.2" width="3.2" height="1.2" fill="#4a1a14"/><rect x="31.8" y="46.7" width="2.3" height="1.2" fill="#4a1a14"/><rect x="35.5" y="45.3" width="3.6" height="1.2" fill="#4a1a14"/><rect x="40.3" y="46.8" width="3.1" height="1.2" fill="#4a1a14"/><rect x="44.8" y="45.2" width="2.1" height="1.2" fill="#4a1a14"/><rect x="22.0" y="52.6" width="2.0" height="1.2" fill="#4a1a14"/><rect x="26.2" y="51.6" width="2.0" height="1.2" fill="#4a1a14"/><rect x="30.2" y="52.6" width="3.1" height="1.2" fill="#4a1a14"/><rect x="34.5" y="51.6" width="1.8" height="1.2" fill="#4a1a14"/><rect x="38.4" y="51.7" width="2.2" height="1.2" fill="#4a1a14"/><circle cx="6" cy="40" r="3.5" fill="none" stroke="#4a1a14" stroke-width="0.8"/></svg>
<div class="t" style="left:1345px;top:542px;font-size:9px;color:#e4e4e4;transform:scaleX(0.87);transform-origin:0 0">итог</div>
<div class="a ck" style="left:1273px;top:584px;width:38px;height:63px"></div>
<svg style="left:1273px;top:584px" width="38" height="63" viewBox="544 150 304 505"><g>
<!-- colored muscles -->
<path fill="#1b2b9e" d="M581,240 L590,233 L606,231 L602,246 L594,259 L590,272 L579,275 L578,258 Z"/>
<path fill="#3c8b3b" d="M590,252 L602,242 L626,231 L634,238 L634,291 L605,292 L599,275 Z"/>
<path fill="#a74f1d" d="M575,276 L590,273 L597,270 L588,315 L572,316 Z"/>
<path fill="#d9872f" d="M564,331 Q578,332 582,346 Q583,372 578,392 Q572,402 562,399 Q555,380 556,356 Q557,338 564,331 Z"/>
<path fill="#b0703f" d="M604,309 L616,306 L627,340 L625,368 L610,366 Z"/>
<path fill="#c0571f" d="M623,299 L636,296 L638,380 L626,381 Z"/>
<path fill="#974f1d" d="M585,390 Q590,380 605,382 Q625,385 628,420 L630,470 Q628,492 612,493 Q600,492 597,470 Z"/>
<path fill="#e8813a" d="M620,392 L631,393 L632,490 L624,490 Z"/>
<ellipse fill="#4cb83d" cx="629" cy="555" rx="15" ry="30"/>
<path fill="#2e4acc" d="M626,580 L636,580 L635,620 L628,620 Z"/>
</g><g>
<!-- blue calf + orange muscle -->
<path fill="#2e4acc" d="M726,527 Q740,518 752,528 Q763,545 760,572 Q752,600 748,617 L733,617 Q728,590 727,560 Z"/>
<path fill="#ec8036" d="M772,482 Q774,468 782,468 Q789,470 790,482 Q792,468 800,468 Q808,470 806,486 Q806,530 801,570 L795,578 L786,574 L778,578 Q773,540 772,500 Z"/>
<path d="M776,574 Q782,610 788,648 M802,574 Q800,615 797,655" stroke="#ec8036" stroke-width="3" fill="none" stroke-linecap="round"/>
<path d="M770,466 Q770,520 776,572 M807,465 Q810,520 803,570" stroke="#ec8036" stroke-width="1.3" fill="none"/>
</g></svg>
<div class="t" style="left:1320px;top:613px;font-size:9px;color:#e4e4e4;transform:scaleX(0.87);transform-origin:0 0">Слой 38</div>
<div class="a" style="left:1271px;top:653px;width:62px;height:67px;background:#f0f0f0"></div>
<div class="a ck" style="left:1273px;top:655px;width:58px;height:63px"></div>
<div class="a" style="left:1272px;top:654px;width:60px;height:65px;border:1px solid #111"></div>
<svg style="left:1273px;top:655px" width="58" height="63" viewBox="465 153 501 544"><g>
<!-- navy outlines -->
<ellipse class="nv" cx="634" cy="178" rx="28.5" ry="23.5" stroke-width="2.76"/>
<ellipse cx="633" cy="176" rx="25" ry="20" fill="none" stroke="#2b3b2b" stroke-width="1.72"/>
<circle class="nv" cx="637.5" cy="203" r="16" stroke-width="2.30"/>
<path class="nv" d="M622,210 L628,240 M650,212 L646,240 M626,240 L648,240" stroke-width="2.07"/>
<path d="M632,160 L633,230 M640,200 L641,240" stroke="#2a3a2a" stroke-width="1.38" fill="none"/>
<path class="nv" d="M596,239 L628,233" stroke-width="3.45"/>
<path class="nv" d="M636,243 Q672,238 676,290 Q676,330 642,334" stroke-width="2.76"/>
<circle class="nv" cx="678" cy="245" r="9" stroke-width="2.53"/>
<path class="nv" d="M641,386 L641,399 M635,398 L647,398" stroke-width="2.30"/><path d="M640,243 L642,292 M637,296 L645,304 M645,296 L638,304" stroke="#1f3a2c" stroke-width="1.2" fill="none"/>
<path d="M638,240 L638,300" stroke="#1f3a2a" stroke-width="1.49" fill="none"/>
<ellipse class="nv" cx="640" cy="356" rx="37" ry="5" stroke-width="2.30"/>
<path class="nv" d="M603,357 Q606,386 640,388 Q672,386 677,357" stroke-width="2.30"/>
<path class="nv" d="M598,268 Q600,320 604,350 Q602,372 592,392" stroke-width="2.76"/>
<path class="nv" d="M590,383 Q582,400 586,430 Q592,470 606,494 L626,494 M633,384 L634,492" stroke-width="2.53"/>
<circle class="nv" cx="619" cy="508" r="9" stroke-width="2.30"/>
<path class="nv" d="M610,516 Q616,570 624,610 L627,620 M634,492 Q648,530 646,562" stroke-width="2.8"/>
<path class="nv" d="M592,638 L627,614" stroke-width="2.76"/>
<path class="nv" d="M644,590 L640,636" stroke-width="2.6"/>
<!-- tablet -->
<rect x="546" y="405" width="24" height="22" fill="#c8ddf2" stroke="#141936" stroke-width="2.99"/>
<path class="nv" d="M566,408 L566,426" stroke-width="1.38"/>
<!-- annotations -->
<path class="nv" d="M575,217 Q580,226 589,234 M583,233 L589,234 L588,228" stroke-width="1.61"/>
<path class="nv" d="M589,236 Q578,238 571,252 Q566,262 564,269 M554,266 L564,269 Q562,280 554,291 Q549,304 552,314 Q556,319 563,319" stroke-width="1.72"/>
<path class="nv" d="M536,274 Q538,260 551,259 M547,256 L551,259 L547,262" stroke-width="1.49"/>
<path class="nv" d="M555,330 Q545,335 549,352 Q553,364 543,372 Q540,384 548,388 L554,390" stroke-width="1.72"/>
<ellipse cx="578" cy="319.5" rx="8.5" ry="3.2" fill="none" stroke="#141936" stroke-width="2.07"/>
<text x="0" y="0" font-family="Liberation Serif" font-style="italic" font-size="16" fill="#141936" transform="translate(526,272) rotate(-62)" letter-spacing="-0.5">плечи</text>
<text x="0" y="0" font-family="Liberation Serif" font-style="italic" font-size="16" fill="#141936" transform="translate(513,382) rotate(-62)" letter-spacing="-1">предплечье</text>
<!-- ===== LEFT SKETCH LEGS ===== -->
<path class="nv" d="M486,493 L482,515 Q486,560 490,600 L494,652" stroke-width="4.14"/>
<path class="nv" d="M489,494 L478,520" stroke-width="2.88"/>
<path class="nv" d="M515,500 Q526,550 513,580 Q507,620 520,655" stroke-width="2.99"/>
<path class="nv" d="M488,652 L522,656 M490,658 Q505,665 520,662" stroke-width="2.76"/>
<path d="M466,502 L540,576 M479,635 L521,607" stroke="#3a55d2" stroke-width="4.02" stroke-linecap="round"/>
<path class="nv" d="M560,502 Q545,545 552,587 Q558,605 570,615" stroke-width="2.76"/>
<path class="nv" d="M582,499 Q596,545 590,585 Q587,605 580,620" stroke-width="2.76"/>
<path class="nv" d="M555,560 L585,512" stroke-width="2.30"/>
<path class="nv" d="M551,599 L585,632" stroke-width="2.30"/>
<path class="nv" d="M566,620 L562,665 L591,660 L590,622" stroke-width="2.99"/>
<!-- ===== RIGHT SKETCHES ===== -->
<ellipse class="nv" cx="778" cy="186" rx="33" ry="27" stroke-width="2.99"/>
<path class="nv" d="M810,198 Q822,210 818,224 Q810,235 795,232 Q782,228 782,212" stroke-width="2.53"/>
<!-- hand box sketch -->
<g fill="none" stroke-linecap="round" stroke-linejoin="round">
<path d="M804,370 Q802,330 808,316 Q816,302 826,305 Q836,310 842,338" stroke="#1f3a2c" stroke-width="1.84"/>
<path d="M811,310 L813,348 M818,306 L825,348 M823,309 L836,344 M812,352 L842,346" stroke="#1f3a2c" stroke-width="1.38"/>
<path d="M783,352 Q786,338 792,341 Q796,346 792,356 L808,363 M783,352 L785,368 L812,390" stroke="#1f3a2c" stroke-width="1.84"/>
<path d="M824,332 L864,340 L850,382 L815,377 Z" stroke="#141936" stroke-width="3.22"/>
<path d="M817,384 L850,388 M843,342 L858,372 M820,340 L850,352" stroke="#1f3a2c" stroke-width="1.38"/>
<path d="M858,358 Q878,350 882,390 L874,398 M854,372 Q868,362 874,398" stroke="#141936" stroke-width="2.53"/>
<path d="M826,390 L832,438 M844,388 L852,434" stroke="#1f3a2c" stroke-width="2.30"/>
<path d="M810,392 L822,396 L818,406 L806,402 Z M806,408 L816,410 L813,424 L804,422 Z M808,430 L810,438" stroke="#141936" stroke-width="2.53"/>
<path d="M862,394 L876,398 L870,410 L858,414 M856,420 Q862,412 866,418" stroke="#141936" stroke-width="2.30"/>
</g>
<path class="nv" d="M920,352 Q945,346 954,360 Q955,375 930,397 M920,352 Q912,370 914,390 Q922,386 930,397" stroke-width="2.53"/>
</g><g>
<!-- bent leg -->
<path class="nv" d="M778,460 Q840,465 880,490 Q900,505 907,530" stroke-width="2.99"/>
<path class="nv" d="M762,467 Q745,466 747,500 M762,468 L868,508" stroke-width="2.76"/>
<path class="nv" d="M742,513 L845,537" stroke-width="2.53"/>
<ellipse class="nv" cx="866" cy="528" rx="12" ry="15" stroke-width="2.53"/>
<circle class="nv" cx="886" cy="538" r="15" stroke-width="2.53"/>
<path class="nv" d="M900,530 L908,532 L906,552 L898,550 Z" stroke-width="2.30"/>
<ellipse class="nv" cx="883" cy="550" rx="20" ry="5" stroke-width="2.30"/>
<path class="nv" d="M863,550 L863,646 L888,646 M905,540 L888,646" stroke-width="2.99"/>
<path class="nv" d="M888,648 Q905,668 918,674 L935,680 L945,688 L938,694 Q920,695 900,692 L865,690 Q850,688 857,672" stroke-width="2.99"/>
</g></svg>
<div class="t" style="left:1340px;top:683px;font-size:9px;color:#e4e4e4;transform:scaleX(0.87);transform-origin:0 0">Слой 39</div>
<div class="a ck" style="left:1273px;top:724px;width:27px;height:59px"></div>
<svg style="left:1273px;top:724px" width="27" height="59" viewBox="272 162 221 483"><g>
<!-- ===== LEFT BLUE MANNEQUIN ===== -->
<path class="bl" d="M356,163.5 Q372,162 391,163.5 Q395,164 394.5,169 L390,214 Q389.5,219 384,219.5 L362,219.5 Q357,219.5 356.5,214 L352,169 Q352,164 356,163.5 Z"/>
<rect class="bl" x="371" y="216" width="6" height="22"/>
<path class="bl" d="M344,237 L405,234 L413,336 L345,336 Z"/>
<rect class="bl" x="373" y="334" width="7" height="19"/>
<path class="bl" d="M349,351 L415,352 L414,362 Q402,386 381,386 Q360,386 349,362 Z"/>
<path class="bs" d="M336,252 L313,322" stroke-width="13"/>
<path class="bs" d="M420,252 L440,307" stroke-width="12"/>
<path class="bs" d="M311,336 L302,392" stroke-width="12"/>
<path class="bs" d="M444,326 L460,388" stroke-width="12"/>
<path class="bs" d="M343,386 Q346,440 355,500" stroke-width="16"/>
<path class="bs" d="M422,384 Q421,450 411,497" stroke-width="15"/>
<path class="bs" d="M357,523 L367,611" stroke-width="15"/>
<path class="bs" d="M411,523 L399,612" stroke-width="13"/>
<!-- hands -->
<path class="bl" d="M293.4,403.4 L310.9,410.4 L318.7,425.2 L315.2,433.1 L312.6,431.4 L311.7,426.1 L306.5,424.4 L305.6,430.5 L283.7,425.2 L288.1,409.5 Z"/>
<path class="bs" d="M284,431 L284.5,436 M288.5,434.5 L288.8,441.5 M295,436.5 L295.3,445.5 M301.2,437.5 L302,446.5" stroke-width="3.8"/>
<path class="os" d="M284,427 L304.7,437" stroke-width="5.5"/>
<path class="bl" d="M450.7,400.1 L472.6,398.8 L478.7,408.9 L479.6,415 L456.9,422 L452.5,418.5 L444.6,416.7 L445.5,408.9 Z"/>
<path class="bs" d="M445,420 L452,430 M460.4,429 L461.2,440 M466.5,428 L469,437.5 M472.6,427 L474.4,434 M479.6,423.7 L483,433" stroke-width="4.2"/>
<path class="os" d="M457,424.5 L481,418.5" stroke-width="6"/>
<!-- feet -->
<path class="bl" d="M321,638 L355,625 L378,627 L381,639 L360,642 L325,642 Z"/>
<path class="os" d="M329,635 L343,644" stroke-width="3.5"/>
<path class="bl" d="M394,630 L415,628 L440,633 L444,639 L420,643 L396,643 Z"/>
<path class="os" d="M428,642 L432,633" stroke-width="4"/>
<!-- joints -->
<circle class="or" cx="342" cy="241" r="11.5"/>
<ellipse class="or" cx="414" cy="243" rx="11" ry="8.5" transform="rotate(30 414 243)"/>
<circle class="or" cx="312.5" cy="324" r="10.5"/>
<circle class="or" cx="442.5" cy="315" r="10.5"/>
<ellipse class="or" cx="302" cy="398" rx="7.5" ry="5.5" transform="rotate(20 302 398)"/>
<circle class="or" cx="460" cy="396" r="8"/>
<circle class="or" cx="340" cy="370" r="14"/>
<circle class="or" cx="423" cy="368" r="12.5"/>
<circle class="or" cx="355" cy="508" r="11"/>
<circle class="or" cx="411.5" cy="507" r="11"/>
<ellipse class="or" cx="369" cy="618" rx="8.5" ry="4.5"/>
<ellipse class="or" cx="400" cy="625" rx="9" ry="5.5"/>

</g></svg>
<div class="t" style="left:1309px;top:754px;font-size:9px;color:#e4e4e4;transform:scaleX(0.87);transform-origin:0 0">Слой 37 копия</div>

<svg style="left:1250px;top:611px" width="15" height="10"><path d="M0.5 5 Q7 -1.5 13.5 5 Q7 11.5 0.5 5Z" fill="#e8e8e8"/><circle cx="7" cy="5" r="2.6" fill="#5d5d5d"/><circle cx="7" cy="5" r="1.3" fill="#e8e8e8"/></svg>
<svg style="left:1250px;top:682px" width="15" height="10"><path d="M0.5 5 Q7 -1.5 13.5 5 Q7 11.5 0.5 5Z" fill="#e8e8e8"/><circle cx="7" cy="5" r="2.6" fill="#5d5d5d"/><circle cx="7" cy="5" r="1.3" fill="#e8e8e8"/></svg>
<svg style="left:1250px;top:752px" width="15" height="10"><path d="M0.5 5 Q7 -1.5 13.5 5 Q7 11.5 0.5 5Z" fill="#e8e8e8"/><circle cx="7" cy="5" r="2.6" fill="#5d5d5d"/><circle cx="7" cy="5" r="1.3" fill="#e8e8e8"/></svg>

<!-- bottom bar icons -->
<svg style="left:1352px;top:786px" width="148" height="14">
 <path d="M5 4 L3 4 A3 3 0 0 0 3 10 L5 10 M9 4 L11 4 A3 3 0 0 1 11 10 L9 10 M5 7 L9 7" stroke="#8e8e8e" stroke-width="1.2" fill="none"/>
 <text x="27" y="11" font-size="11" font-style="italic" font-family="Liberation Serif" fill="#e0e0e0">fx</text>
 <rect x="46" y="2" width="12" height="9" fill="#e6e6e6"/><circle cx="52" cy="6.5" r="2.8" fill="#5a5a5a"/>
 <circle cx="74" cy="7" r="5" fill="none" stroke="#e6e6e6" stroke-width="1.3"/><path d="M70.5 10.5 L77.5 3.5 A5 5 0 0 1 70.5 10.5Z" fill="#e6e6e6"/>
 <path d="M90 3 L94 3 L95 4.5 L101 4.5 L101 12 L90 12Z" fill="#e6e6e6"/>
 <path d="M113 3 L122 3 L122 12 L113 12Z" fill="none" stroke="#e6e6e6" stroke-width="1.3"/><path d="M113 3 L117 3 L117 7 L113 7Z" fill="#e6e6e6"/>
 <path d="M134 4 L144 4 M137 4 L137 2.5 L141 2.5 L141 4 M135 5 L136 13 L142 13 L143 5" stroke="#e6e6e6" stroke-width="1.3" fill="none"/>
</svg>

<!-- tooltip -->
<div class="a" style="left:1266px;top:605px;width:129px;height:14px;background:#fdfbe0;border:1px solid #2e2e2e"></div>
<div class="t" style="left:1270px;top:607px;font-size:8.5px;color:#1a1a1a">Указывает на видимость слоя</div>
<!-- cursor -->
<svg style="left:1259px;top:588px" width="16" height="17"><path d="M6.5,1.2 Q8.3,0.6 8.8,2.2 L9.2,6.2 Q10.6,5.2 11.6,6.3 Q12.9,5.8 13.6,7.2 Q15,7 15.2,8.6 L14.8,12.2 L12.6,15.6 L7.4,15.6 L3.4,11.6 L1.2,9.6 Q0.6,8.1 2.2,7.8 Q3.4,7.8 4.8,9.2 L5.4,9.6 L5.4,2.6 Q5.6,1.4 6.5,1.2 Z" fill="#f6f6f6" stroke="#1a1a1a" stroke-width="0.9"/><path d="M9.2,6.4 L9.4,10 M11.6,6.4 L11.7,10 M13.6,7.4 L13.6,10.2" stroke="#555" stroke-width="0.6"/></svg>

<!-- tool column icons -->
<div class="a" style="left:1212px;top:85px;width:30px;height:1px;background:#4a4a4a"></div>
<div class="a" style="left:1212px;top:142px;width:30px;height:1px;background:#4a4a4a"></div>
<div class="a" style="left:1212px;top:198px;width:30px;height:1px;background:#4a4a4a"></div>
<div class="a" style="left:1212px;top:232px;width:30px;height:1px;background:#4a4a4a"></div>
<div class="a" style="left:1212px;top:265px;width:30px;height:1px;background:#4a4a4a"></div>
<div class="a" style="left:1212px;top:297px;width:30px;height:1px;background:#4a4a4a"></div>
<svg style="left:1212px;top:29px" width="30" height="280">
 <g fill="#e8e8e8" stroke="#e8e8e8">
  <path d="M9 13 L25 13" stroke-width="1.5"/><path d="M9 13 Q13 10 16 13 Q13 16 9 13Z" stroke="none"/>
  <path d="M10 19.5 L19 19.5" stroke-width="1.6"/><path d="M19 19.5 L25 16 L25 23Z" stroke="none"/>
  <rect x="8" y="39" width="2" height="2" stroke="none"/><rect x="11" y="39.5" width="4" height="1" stroke="none"/>
  <rect x="8" y="42" width="2" height="2" stroke="none"/><rect x="11" y="42.5" width="4" height="1" stroke="none"/>
  <rect x="8" y="45" width="2" height="2" stroke="none"/><rect x="11" y="45.5" width="4" height="1" stroke="none"/>
  <path d="M26 38 L18 46" stroke-width="1.8"/><path d="M13 50 Q14 46 17.5 45.5 Q19 47 17.5 48.5 Q15.5 50 13 50Z" stroke="none"/>
  <path d="M10 67 L13 65.5 L16 67 L16 71 L13 72.5 L10 71Z" fill="none" stroke-width="1"/>
  <rect x="18" y="65" width="3.5" height="3" stroke="none"/><rect x="18" y="69" width="3.5" height="3" stroke="none"/>
  <rect x="10" y="74" width="12" height="2.5" stroke="none"/>
  <circle cx="16" cy="99" r="6" fill="none" stroke-width="1.5"/><path d="M11.8 103.2 L20.2 94.8 A6 6 0 0 1 11.8 103.2Z" stroke="none"/>
  <circle cx="13.5" cy="129" r="3.5" stroke="none" opacity="0.9"/><circle cx="18.5" cy="129" r="3.5" stroke="none" opacity="0.9"/><circle cx="16" cy="133" r="3.5" stroke="none" opacity="0.9"/>
  <path d="M9 149 Q16 140 23 149 M11 149 L9 159 M21 149 L23 159" fill="none" stroke-width="1.2"/><rect x="7.5" y="147.5" width="3" height="3" stroke="none"/><rect x="21.5" y="147.5" width="3" height="3" stroke="none"/><rect x="14.5" y="142.5" width="3" height="3" stroke="none"/><rect x="7.5" y="157.5" width="3" height="3" stroke="none"/><rect x="21.5" y="157.5" width="3" height="3" stroke="none"/>
 </g>
 <text x="8" y="193" font-size="14" fill="#e8e8e8" font-family="Liberation Sans">A</text><rect x="20" y="181" width="1.2" height="13" fill="#e8e8e8"/>
 <text x="9" y="227" font-size="15" font-style="italic" fill="#e8e8e8" font-family="Liberation Serif">A</text>
 <text x="10" y="259" font-size="14" font-weight="bold" fill="#e8e8e8" font-family="Liberation Sans">¶</text>
</svg>


<!-- ===== webcam ===== -->
<div class="a" id="cam" style="left:0;top:512px;width:157px;height:264px;background:#dcdcdc;overflow:hidden">
<svg style="left:0;top:0" width="157" height="264" viewBox="0 512 157 264">
<defs>
<linearGradient id="wall" x1="0" y1="0" x2="1" y2="1"><stop offset="0" stop-color="#e0e0de"/><stop offset="1" stop-color="#d6d6d4"/></linearGradient>
<radialGradient id="face" cx="0.5" cy="0.45" r="0.6"><stop offset="0" stop-color="#e8c4a8"/><stop offset="0.8" stop-color="#d9a98c"/><stop offset="1" stop-color="#c8927a"/></radialGradient>
<linearGradient id="hood" x1="0" y1="0" x2="1" y2="1"><stop offset="0" stop-color="#cc4a36"/><stop offset="1" stop-color="#bb3c28"/></linearGradient>
<filter id="bl1"><feGaussianBlur stdDeviation="1.2"/></filter>
<filter id="bl2"><feGaussianBlur stdDeviation="0.6"/></filter>
</defs>
<rect x="0" y="512" width="157" height="264" fill="url(#wall)"/>
<g filter="url(#bl2)">
<!-- neck -->
<path d="M26,628 L76,626 L80,690 L28,690 Z" fill="#d4a68a"/>
<!-- hoodie body -->
<path fill="url(#hood)" d="M0,658 L16,648 Q22,670 40,690 Q60,700 76,678 Q82,660 84,632 Q96,640 110,650 Q128,668 142,692 Q146,720 142,740 L132,742 L131,776 L0,776 Z"/>
<path d="M16,648 Q24,685 44,698 Q66,704 80,682 Q88,660 86,636" fill="none" stroke="#a83422" stroke-width="3" opacity="0.55" filter="url(#bl1)"/>
<path d="M60,720 Q75,740 70,776" stroke="#a83422" stroke-width="4" fill="none" opacity="0.4" filter="url(#bl1)"/>
<path d="M30,668 Q36,690 48,694 Q62,692 66,684" fill="none" stroke="#9a9a9a" stroke-width="1.6" stroke-dasharray="1.5 1"/>
<path d="M38,702 Q44,716 46,712" stroke="#3a2a28" stroke-width="3" fill="none"/>
<rect x="46" y="714" width="2" height="10" fill="#e0d0a8"/>
<!-- face -->
<path fill="url(#face)" d="M20,602 Q22,578 54,576 Q84,578 83,602 Q84,635 68,652 Q55,662 42,655 Q24,642 20,606 Z"/>
<ellipse cx="18" cy="618" rx="3.5" ry="7" fill="#d4a084"/>
<path d="M28,603 Q36,600 44,603 M58,602 Q66,599 74,602" stroke="#7a5a4a" stroke-width="1.4" fill="none"/>
<ellipse cx="36" cy="610" rx="4" ry="1.8" fill="#6a5048"/>
<ellipse cx="65" cy="608.5" rx="4" ry="1.8" fill="#6a5048"/>
<path d="M50,614 Q49,624 52,626 Q56,627 58,624" stroke="#c89478" stroke-width="1.3" fill="none"/>
<path d="M44,636 Q52,633 61,635 Q53,641 44,636Z" fill="#b87a6a"/>
<path d="M20,632 L22,640" stroke="#a0a0a0" stroke-width="1"/>
<!-- hair -->
<path fill="#4a3c32" d="M2,586 Q4,562 24,556 Q38,550 52,552 Q72,552 83,563 Q90,576 88,592 Q87,604 85,610 L81,600 Q79,586 68,580 Q57,575 48,577 Q34,580 28,590 Q22,600 20,612 L16,618 Q6,608 2,592 Z"/>
<path fill="#665548" d="M14,572 Q28,560 46,560 Q38,566 30,570 Q20,576 16,588 Z" opacity="0.7"/>
<path fill="#5a4a3e" d="M56,556 Q72,556 80,570 Q70,566 60,566 Z" opacity="0.8"/>
<!-- hand -->
<path fill="#d8ab8c" d="M113,724 Q118,718 128,724 L140,728 Q146,716 152,706 L157,700 L157,776 L131,776 L132,742 Q120,736 113,724 Z"/>
<path fill="#dfb498" d="M152,682 L157,676 L157,696 L150,700 Z"/>
</g>
</svg>

</div>
<div class="a" style="left:0;top:774px;width:157px;height:16px;background:linear-gradient(#151515,#2c2c2c 60%)"></div>

</body></html>
